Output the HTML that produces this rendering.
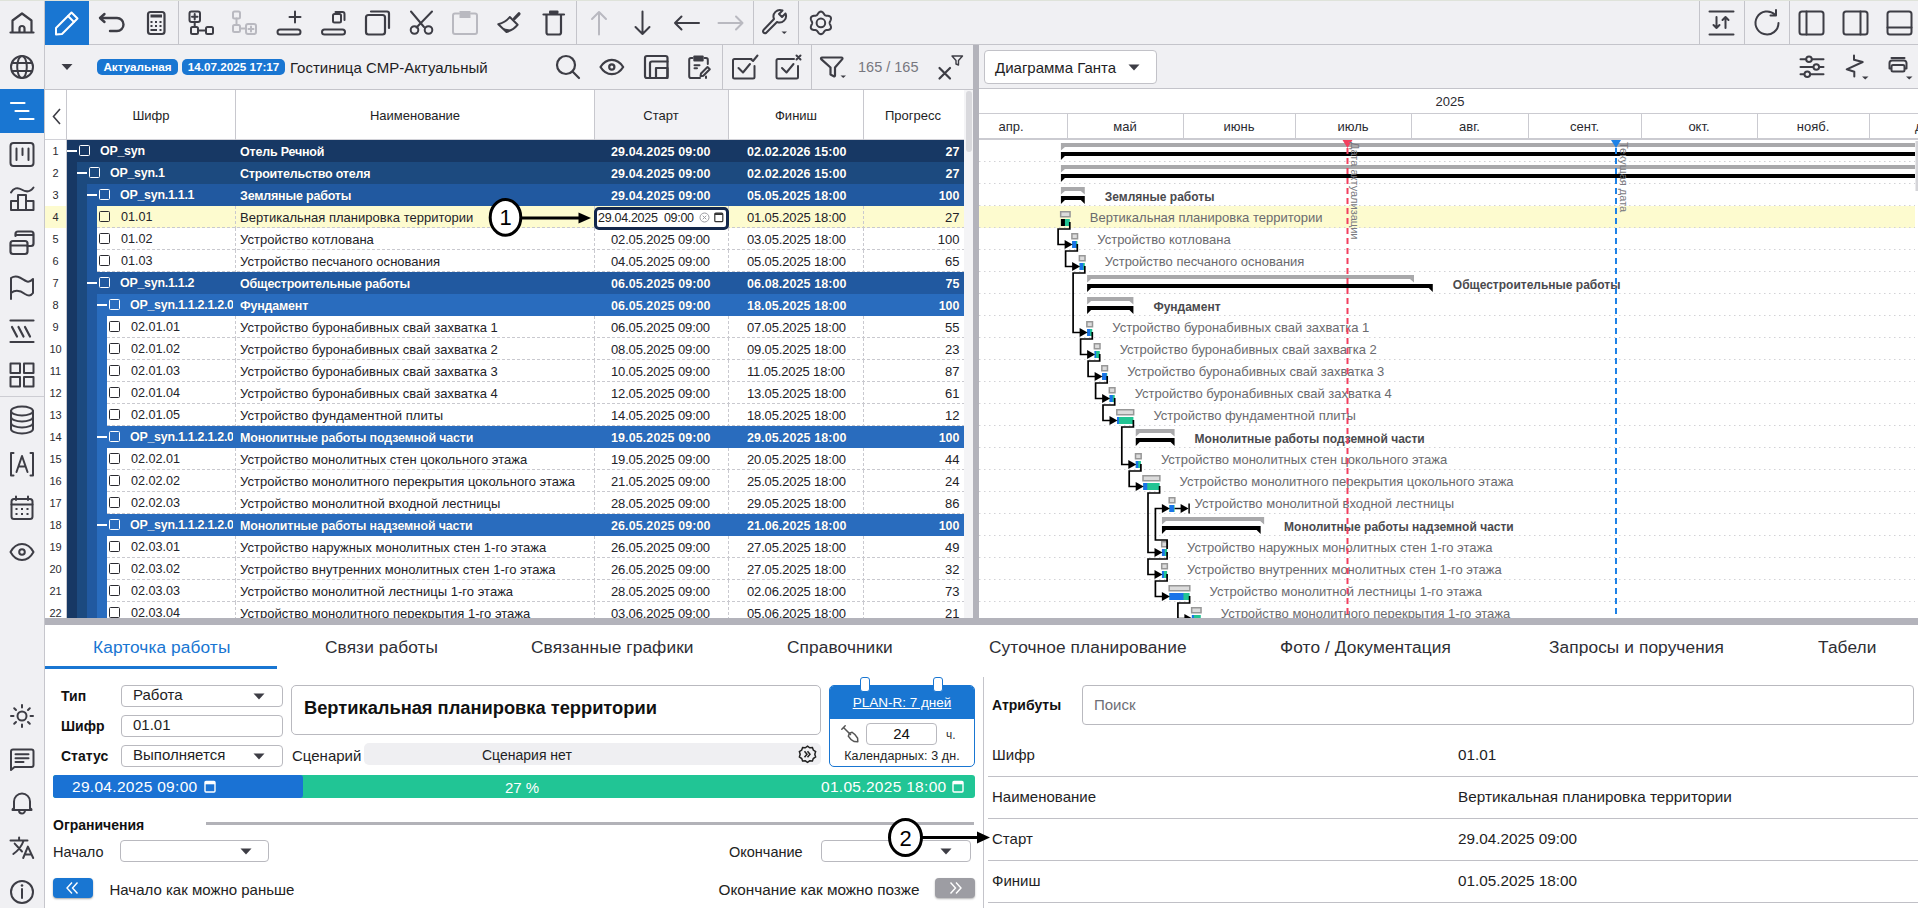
<!DOCTYPE html>
<html><head><meta charset="utf-8"><style>
html,body{margin:0;padding:0;}
body{width:1918px;height:908px;overflow:hidden;position:relative;background:#f0f0f3;font-family:"Liberation Sans", sans-serif;}
</style></head><body>
<div style="position:absolute;left:0px;top:0px;width:1918px;height:1px;background:#dfe3da"></div><div style="position:absolute;left:44px;top:1px;width:1px;height:907px;background:#c6c6cc"></div><div style="position:absolute;left:0px;top:89px;width:44px;height:44px;background:#1976d2"></div><div style="position:absolute;left:0px;top:396px;width:44px;height:1px;background:#cdcdd3"></div><div style="position:absolute;left:45px;top:1px;width:44px;height:44px;background:#1976d2"></div><div style="position:absolute;left:89px;top:44px;width:1829px;height:1px;background:#c4c4ca"></div><div style="position:absolute;left:45px;top:89px;width:928px;height:1px;background:#c4c4ca"></div><div style="position:absolute;left:979px;top:88px;width:939px;height:1px;background:#c4c4ca"></div><div style="position:absolute;left:97px;top:59px;width:81px;height:16px;background:#1976d2;border-radius:5px"></div><div style="position:absolute;left:92.5px;top:58.7px;width:90px;height:16px;line-height:16px;text-align:center;font-size:11.7px;color:#fff;font-weight:bold;white-space:nowrap;">Актуальная</div><div style="position:absolute;left:182px;top:59px;width:103px;height:16px;background:#1976d2;border-radius:5px"></div><div style="position:absolute;left:178.5px;top:58.7px;width:110px;height:16px;line-height:16px;text-align:center;font-size:11.7px;color:#fff;font-weight:bold;white-space:nowrap;">14.07.2025 17:17</div><div style="position:absolute;left:290px;top:58.0px;height:19px;line-height:19px;font-size:15px;color:#1e1e24;font-weight:normal;white-space:nowrap;">Гостиница СМР-Актуальный</div><div style="position:absolute;left:858px;top:58.0px;height:18px;line-height:18px;font-size:14.5px;color:#77777f;font-weight:normal;white-space:nowrap;letter-spacing:0px">165 / 165</div><div style="position:absolute;left:45px;top:90px;width:919px;height:49px;background:#fff"></div><div style="position:absolute;left:595px;top:90px;width:133px;height:49px;background:#f2f2f5"></div><div style="position:absolute;left:45px;top:139px;width:919px;height:1px;background:#d2d2d8"></div><div style="position:absolute;left:66px;top:90px;width:1px;height:50px;background:#c8c8ce"></div><div style="position:absolute;left:235px;top:90px;width:1px;height:50px;background:#c8c8ce"></div><div style="position:absolute;left:594px;top:90px;width:1px;height:50px;background:#c8c8ce"></div><div style="position:absolute;left:728px;top:90px;width:1px;height:50px;background:#c8c8ce"></div><div style="position:absolute;left:863px;top:90px;width:1px;height:50px;background:#c8c8ce"></div><svg style="position:absolute;left:50px;top:106px" width="14" height="20" viewBox="0 0 14 20"><path d="M10 3L3.5 10.5L10 18" fill="none" stroke="#3d3d45" stroke-width="1.6"/></svg><div style="position:absolute;left:71.0px;top:106.5px;width:160px;height:17px;line-height:17px;text-align:center;font-size:13px;color:#1e1e24;font-weight:normal;white-space:nowrap;">Шифр</div><div style="position:absolute;left:335.0px;top:106.5px;width:160px;height:17px;line-height:17px;text-align:center;font-size:13px;color:#1e1e24;font-weight:normal;white-space:nowrap;">Наименование</div><div style="position:absolute;left:581.0px;top:106.5px;width:160px;height:17px;line-height:17px;text-align:center;font-size:13px;color:#1e1e24;font-weight:normal;white-space:nowrap;">Старт</div><div style="position:absolute;left:716.0px;top:106.5px;width:160px;height:17px;line-height:17px;text-align:center;font-size:13px;color:#1e1e24;font-weight:normal;white-space:nowrap;">Финиш</div><div style="position:absolute;left:833.0px;top:106.5px;width:160px;height:17px;line-height:17px;text-align:center;font-size:13px;color:#1e1e24;font-weight:normal;white-space:nowrap;">Прогресс</div><div style="position:absolute;left:45px;top:140px;width:21px;height:22px;background:#fff"></div><div style="position:absolute;left:43.5px;top:144.0px;width:24px;height:15px;line-height:15px;text-align:center;font-size:11px;color:#2a2a30;font-weight:normal;white-space:nowrap;">1</div><div style="position:absolute;left:67px;top:140px;width:897px;height:22px;background:#173864"></div><div style="position:absolute;left:67px;top:150px;width:10px;height:2px;background:#fff"></div><div style="position:absolute;left:79px;top:145px;width:9.4px;height:9.4px;border:1.6px solid #fff;border-radius:1.5px"></div><div style="position:absolute;left:100px;top:142px;width:133px;overflow:hidden;line-height:18px;font-size:12.5px;font-weight:bold;color:#fff;white-space:nowrap;letter-spacing:-0.3px;text-shadow:0 0 1px rgba(0,0,0,.35)">OP_syn</div><div style="position:absolute;left:240px;top:143.5px;height:16px;line-height:16px;font-size:12.5px;color:#fff;font-weight:bold;white-space:nowrap;letter-spacing:-0.2px;text-shadow:0 0 1px rgba(0,0,0,.35)">Отель Речной</div><div style="position:absolute;left:611px;top:143.5px;height:16px;line-height:16px;font-size:12.5px;color:#fff;font-weight:bold;white-space:nowrap;letter-spacing:0.1px;text-shadow:0 0 1px rgba(0,0,0,.35)">29.04.2025 09:00</div><div style="position:absolute;left:747px;top:143.5px;height:16px;line-height:16px;font-size:12.5px;color:#fff;font-weight:bold;white-space:nowrap;letter-spacing:0.1px;text-shadow:0 0 1px rgba(0,0,0,.35)">02.02.2026 15:00</div><div style="position:absolute;left:899.5px;top:143.5px;width:60px;height:16px;line-height:16px;text-align:right;font-size:12.5px;color:#fff;font-weight:bold;white-space:nowrap;text-shadow:0 0 1px rgba(0,0,0,.35)">27</div><div style="position:absolute;left:45px;top:162px;width:21px;height:22px;background:#fff"></div><div style="position:absolute;left:43.5px;top:166.0px;width:24px;height:15px;line-height:15px;text-align:center;font-size:11px;color:#2a2a30;font-weight:normal;white-space:nowrap;">2</div><div style="position:absolute;left:67px;top:162px;width:10px;height:22px;background:#173864"></div><div style="position:absolute;left:77px;top:162px;width:887px;height:22px;background:#1c4a7f"></div><div style="position:absolute;left:77px;top:172px;width:10px;height:2px;background:#fff"></div><div style="position:absolute;left:89px;top:167px;width:9.4px;height:9.4px;border:1.6px solid #fff;border-radius:1.5px"></div><div style="position:absolute;left:110px;top:164px;width:123px;overflow:hidden;line-height:18px;font-size:12.5px;font-weight:bold;color:#fff;white-space:nowrap;letter-spacing:-0.3px;text-shadow:0 0 1px rgba(0,0,0,.35)">OP_syn.1</div><div style="position:absolute;left:240px;top:165.5px;height:16px;line-height:16px;font-size:12.5px;color:#fff;font-weight:bold;white-space:nowrap;letter-spacing:-0.2px;text-shadow:0 0 1px rgba(0,0,0,.35)">Строительство отеля</div><div style="position:absolute;left:611px;top:165.5px;height:16px;line-height:16px;font-size:12.5px;color:#fff;font-weight:bold;white-space:nowrap;letter-spacing:0.1px;text-shadow:0 0 1px rgba(0,0,0,.35)">29.04.2025 09:00</div><div style="position:absolute;left:747px;top:165.5px;height:16px;line-height:16px;font-size:12.5px;color:#fff;font-weight:bold;white-space:nowrap;letter-spacing:0.1px;text-shadow:0 0 1px rgba(0,0,0,.35)">02.02.2026 15:00</div><div style="position:absolute;left:899.5px;top:165.5px;width:60px;height:16px;line-height:16px;text-align:right;font-size:12.5px;color:#fff;font-weight:bold;white-space:nowrap;text-shadow:0 0 1px rgba(0,0,0,.35)">27</div><div style="position:absolute;left:45px;top:184px;width:21px;height:22px;background:#fff"></div><div style="position:absolute;left:43.5px;top:188.0px;width:24px;height:15px;line-height:15px;text-align:center;font-size:11px;color:#2a2a30;font-weight:normal;white-space:nowrap;">3</div><div style="position:absolute;left:67px;top:184px;width:10px;height:22px;background:#173864"></div><div style="position:absolute;left:77px;top:184px;width:10px;height:22px;background:#1c4a7f"></div><div style="position:absolute;left:87px;top:184px;width:877px;height:22px;background:#2159a0"></div><div style="position:absolute;left:87px;top:194px;width:10px;height:2px;background:#fff"></div><div style="position:absolute;left:99px;top:189px;width:9.4px;height:9.4px;border:1.6px solid #fff;border-radius:1.5px"></div><div style="position:absolute;left:120px;top:186px;width:113px;overflow:hidden;line-height:18px;font-size:12.5px;font-weight:bold;color:#fff;white-space:nowrap;letter-spacing:-0.3px;text-shadow:0 0 1px rgba(0,0,0,.35)">OP_syn.1.1.1</div><div style="position:absolute;left:240px;top:187.5px;height:16px;line-height:16px;font-size:12.5px;color:#fff;font-weight:bold;white-space:nowrap;letter-spacing:-0.2px;text-shadow:0 0 1px rgba(0,0,0,.35)">Земляные работы</div><div style="position:absolute;left:611px;top:187.5px;height:16px;line-height:16px;font-size:12.5px;color:#fff;font-weight:bold;white-space:nowrap;letter-spacing:0.1px;text-shadow:0 0 1px rgba(0,0,0,.35)">29.04.2025 09:00</div><div style="position:absolute;left:747px;top:187.5px;height:16px;line-height:16px;font-size:12.5px;color:#fff;font-weight:bold;white-space:nowrap;letter-spacing:0.1px;text-shadow:0 0 1px rgba(0,0,0,.35)">05.05.2025 18:00</div><div style="position:absolute;left:899.5px;top:187.5px;width:60px;height:16px;line-height:16px;text-align:right;font-size:12.5px;color:#fff;font-weight:bold;white-space:nowrap;text-shadow:0 0 1px rgba(0,0,0,.35)">100</div><div style="position:absolute;left:45px;top:206px;width:21px;height:22px;background:#fdfbcf"></div><div style="position:absolute;left:43.5px;top:210.0px;width:24px;height:15px;line-height:15px;text-align:center;font-size:11px;color:#2a2a30;font-weight:normal;white-space:nowrap;">4</div><div style="position:absolute;left:67px;top:206px;width:10px;height:22px;background:#173864"></div><div style="position:absolute;left:77px;top:206px;width:10px;height:22px;background:#1c4a7f"></div><div style="position:absolute;left:87px;top:206px;width:10px;height:22px;background:#2159a0"></div><div style="position:absolute;left:97px;top:206px;width:867px;height:22px;background:#fdfbcf"></div><div style="position:absolute;left:97px;top:227px;width:867px;height:1px;background-image:linear-gradient(90deg,#c9c9cf 3px,transparent 3px);background-size:5px 1px"></div><div style="position:absolute;left:235px;top:206px;width:1px;height:22px;background-image:linear-gradient(180deg,#c9c9cf 3px,transparent 3px);background-size:1px 5px"></div><div style="position:absolute;left:594px;top:206px;width:1px;height:22px;background-image:linear-gradient(180deg,#c9c9cf 3px,transparent 3px);background-size:1px 5px"></div><div style="position:absolute;left:728px;top:206px;width:1px;height:22px;background-image:linear-gradient(180deg,#c9c9cf 3px,transparent 3px);background-size:1px 5px"></div><div style="position:absolute;left:863px;top:206px;width:1px;height:22px;background-image:linear-gradient(180deg,#c9c9cf 3px,transparent 3px);background-size:1px 5px"></div><div style="position:absolute;left:99px;top:211px;width:9.4px;height:9.4px;border:1.6px solid #2a2a30;border-radius:1.5px"></div><div style="position:absolute;left:121px;top:209.0px;height:17px;line-height:17px;font-size:12.6px;color:#222228;font-weight:normal;white-space:nowrap;">01.01</div><div style="position:absolute;left:240px;top:209.0px;height:17px;line-height:17px;font-size:13px;color:#222228;font-weight:normal;white-space:nowrap;letter-spacing:0.02px">Вертикальная планировка территории</div><div style="position:absolute;left:747px;top:209.0px;height:17px;line-height:17px;font-size:13px;color:#222228;font-weight:normal;white-space:nowrap;letter-spacing:-0.15px">01.05.2025 18:00</div><div style="position:absolute;left:899.5px;top:209.0px;width:60px;height:17px;line-height:17px;text-align:right;font-size:13px;color:#222228;font-weight:normal;white-space:nowrap;">27</div><div style="position:absolute;left:45px;top:228px;width:21px;height:22px;background:#fff"></div><div style="position:absolute;left:43.5px;top:232.0px;width:24px;height:15px;line-height:15px;text-align:center;font-size:11px;color:#2a2a30;font-weight:normal;white-space:nowrap;">5</div><div style="position:absolute;left:67px;top:228px;width:10px;height:22px;background:#173864"></div><div style="position:absolute;left:77px;top:228px;width:10px;height:22px;background:#1c4a7f"></div><div style="position:absolute;left:87px;top:228px;width:10px;height:22px;background:#2159a0"></div><div style="position:absolute;left:97px;top:228px;width:867px;height:22px;background:#fff"></div><div style="position:absolute;left:97px;top:249px;width:867px;height:1px;background-image:linear-gradient(90deg,#c9c9cf 3px,transparent 3px);background-size:5px 1px"></div><div style="position:absolute;left:235px;top:228px;width:1px;height:22px;background-image:linear-gradient(180deg,#c9c9cf 3px,transparent 3px);background-size:1px 5px"></div><div style="position:absolute;left:594px;top:228px;width:1px;height:22px;background-image:linear-gradient(180deg,#c9c9cf 3px,transparent 3px);background-size:1px 5px"></div><div style="position:absolute;left:728px;top:228px;width:1px;height:22px;background-image:linear-gradient(180deg,#c9c9cf 3px,transparent 3px);background-size:1px 5px"></div><div style="position:absolute;left:863px;top:228px;width:1px;height:22px;background-image:linear-gradient(180deg,#c9c9cf 3px,transparent 3px);background-size:1px 5px"></div><div style="position:absolute;left:99px;top:233px;width:9.4px;height:9.4px;border:1.6px solid #2a2a30;border-radius:1.5px"></div><div style="position:absolute;left:121px;top:231.0px;height:17px;line-height:17px;font-size:12.6px;color:#222228;font-weight:normal;white-space:nowrap;">01.02</div><div style="position:absolute;left:240px;top:231.0px;height:17px;line-height:17px;font-size:13px;color:#222228;font-weight:normal;white-space:nowrap;letter-spacing:0.02px">Устройство котлована</div><div style="position:absolute;left:611px;top:231.0px;height:17px;line-height:17px;font-size:13px;color:#222228;font-weight:normal;white-space:nowrap;letter-spacing:-0.15px">02.05.2025 09:00</div><div style="position:absolute;left:747px;top:231.0px;height:17px;line-height:17px;font-size:13px;color:#222228;font-weight:normal;white-space:nowrap;letter-spacing:-0.15px">03.05.2025 18:00</div><div style="position:absolute;left:899.5px;top:231.0px;width:60px;height:17px;line-height:17px;text-align:right;font-size:13px;color:#222228;font-weight:normal;white-space:nowrap;">100</div><div style="position:absolute;left:45px;top:250px;width:21px;height:22px;background:#fff"></div><div style="position:absolute;left:43.5px;top:254.0px;width:24px;height:15px;line-height:15px;text-align:center;font-size:11px;color:#2a2a30;font-weight:normal;white-space:nowrap;">6</div><div style="position:absolute;left:67px;top:250px;width:10px;height:22px;background:#173864"></div><div style="position:absolute;left:77px;top:250px;width:10px;height:22px;background:#1c4a7f"></div><div style="position:absolute;left:87px;top:250px;width:10px;height:22px;background:#2159a0"></div><div style="position:absolute;left:97px;top:250px;width:867px;height:22px;background:#fff"></div><div style="position:absolute;left:97px;top:271px;width:867px;height:1px;background-image:linear-gradient(90deg,#c9c9cf 3px,transparent 3px);background-size:5px 1px"></div><div style="position:absolute;left:235px;top:250px;width:1px;height:22px;background-image:linear-gradient(180deg,#c9c9cf 3px,transparent 3px);background-size:1px 5px"></div><div style="position:absolute;left:594px;top:250px;width:1px;height:22px;background-image:linear-gradient(180deg,#c9c9cf 3px,transparent 3px);background-size:1px 5px"></div><div style="position:absolute;left:728px;top:250px;width:1px;height:22px;background-image:linear-gradient(180deg,#c9c9cf 3px,transparent 3px);background-size:1px 5px"></div><div style="position:absolute;left:863px;top:250px;width:1px;height:22px;background-image:linear-gradient(180deg,#c9c9cf 3px,transparent 3px);background-size:1px 5px"></div><div style="position:absolute;left:99px;top:255px;width:9.4px;height:9.4px;border:1.6px solid #2a2a30;border-radius:1.5px"></div><div style="position:absolute;left:121px;top:253.0px;height:17px;line-height:17px;font-size:12.6px;color:#222228;font-weight:normal;white-space:nowrap;">01.03</div><div style="position:absolute;left:240px;top:253.0px;height:17px;line-height:17px;font-size:13px;color:#222228;font-weight:normal;white-space:nowrap;letter-spacing:0.02px">Устройство песчаного основания</div><div style="position:absolute;left:611px;top:253.0px;height:17px;line-height:17px;font-size:13px;color:#222228;font-weight:normal;white-space:nowrap;letter-spacing:-0.15px">04.05.2025 09:00</div><div style="position:absolute;left:747px;top:253.0px;height:17px;line-height:17px;font-size:13px;color:#222228;font-weight:normal;white-space:nowrap;letter-spacing:-0.15px">05.05.2025 18:00</div><div style="position:absolute;left:899.5px;top:253.0px;width:60px;height:17px;line-height:17px;text-align:right;font-size:13px;color:#222228;font-weight:normal;white-space:nowrap;">65</div><div style="position:absolute;left:45px;top:272px;width:21px;height:22px;background:#fff"></div><div style="position:absolute;left:43.5px;top:276.0px;width:24px;height:15px;line-height:15px;text-align:center;font-size:11px;color:#2a2a30;font-weight:normal;white-space:nowrap;">7</div><div style="position:absolute;left:67px;top:272px;width:10px;height:22px;background:#173864"></div><div style="position:absolute;left:77px;top:272px;width:10px;height:22px;background:#1c4a7f"></div><div style="position:absolute;left:87px;top:272px;width:877px;height:22px;background:#2159a0"></div><div style="position:absolute;left:87px;top:282px;width:10px;height:2px;background:#fff"></div><div style="position:absolute;left:99px;top:277px;width:9.4px;height:9.4px;border:1.6px solid #fff;border-radius:1.5px"></div><div style="position:absolute;left:120px;top:274px;width:113px;overflow:hidden;line-height:18px;font-size:12.5px;font-weight:bold;color:#fff;white-space:nowrap;letter-spacing:-0.3px;text-shadow:0 0 1px rgba(0,0,0,.35)">OP_syn.1.1.2</div><div style="position:absolute;left:240px;top:275.5px;height:16px;line-height:16px;font-size:12.5px;color:#fff;font-weight:bold;white-space:nowrap;letter-spacing:-0.2px;text-shadow:0 0 1px rgba(0,0,0,.35)">Общестроительные работы</div><div style="position:absolute;left:611px;top:275.5px;height:16px;line-height:16px;font-size:12.5px;color:#fff;font-weight:bold;white-space:nowrap;letter-spacing:0.1px;text-shadow:0 0 1px rgba(0,0,0,.35)">06.05.2025 09:00</div><div style="position:absolute;left:747px;top:275.5px;height:16px;line-height:16px;font-size:12.5px;color:#fff;font-weight:bold;white-space:nowrap;letter-spacing:0.1px;text-shadow:0 0 1px rgba(0,0,0,.35)">06.08.2025 18:00</div><div style="position:absolute;left:899.5px;top:275.5px;width:60px;height:16px;line-height:16px;text-align:right;font-size:12.5px;color:#fff;font-weight:bold;white-space:nowrap;text-shadow:0 0 1px rgba(0,0,0,.35)">75</div><div style="position:absolute;left:45px;top:294px;width:21px;height:22px;background:#fff"></div><div style="position:absolute;left:43.5px;top:298.0px;width:24px;height:15px;line-height:15px;text-align:center;font-size:11px;color:#2a2a30;font-weight:normal;white-space:nowrap;">8</div><div style="position:absolute;left:67px;top:294px;width:10px;height:22px;background:#173864"></div><div style="position:absolute;left:77px;top:294px;width:10px;height:22px;background:#1c4a7f"></div><div style="position:absolute;left:87px;top:294px;width:10px;height:22px;background:#2159a0"></div><div style="position:absolute;left:97px;top:294px;width:867px;height:22px;background:#296cbe"></div><div style="position:absolute;left:97px;top:304px;width:10px;height:2px;background:#fff"></div><div style="position:absolute;left:109px;top:299px;width:9.4px;height:9.4px;border:1.6px solid #fff;border-radius:1.5px"></div><div style="position:absolute;left:130px;top:296px;width:103px;overflow:hidden;line-height:18px;font-size:12.5px;font-weight:bold;color:#fff;white-space:nowrap;letter-spacing:-0.3px;text-shadow:0 0 1px rgba(0,0,0,.35)">OP_syn.1.1.2.1.2.0</div><div style="position:absolute;left:240px;top:297.5px;height:16px;line-height:16px;font-size:12.5px;color:#fff;font-weight:bold;white-space:nowrap;letter-spacing:-0.2px;text-shadow:0 0 1px rgba(0,0,0,.35)">Фундамент</div><div style="position:absolute;left:611px;top:297.5px;height:16px;line-height:16px;font-size:12.5px;color:#fff;font-weight:bold;white-space:nowrap;letter-spacing:0.1px;text-shadow:0 0 1px rgba(0,0,0,.35)">06.05.2025 09:00</div><div style="position:absolute;left:747px;top:297.5px;height:16px;line-height:16px;font-size:12.5px;color:#fff;font-weight:bold;white-space:nowrap;letter-spacing:0.1px;text-shadow:0 0 1px rgba(0,0,0,.35)">18.05.2025 18:00</div><div style="position:absolute;left:899.5px;top:297.5px;width:60px;height:16px;line-height:16px;text-align:right;font-size:12.5px;color:#fff;font-weight:bold;white-space:nowrap;text-shadow:0 0 1px rgba(0,0,0,.35)">100</div><div style="position:absolute;left:45px;top:316px;width:21px;height:22px;background:#fff"></div><div style="position:absolute;left:43.5px;top:320.0px;width:24px;height:15px;line-height:15px;text-align:center;font-size:11px;color:#2a2a30;font-weight:normal;white-space:nowrap;">9</div><div style="position:absolute;left:67px;top:316px;width:10px;height:22px;background:#173864"></div><div style="position:absolute;left:77px;top:316px;width:10px;height:22px;background:#1c4a7f"></div><div style="position:absolute;left:87px;top:316px;width:10px;height:22px;background:#2159a0"></div><div style="position:absolute;left:97px;top:316px;width:10px;height:22px;background:#296cbe"></div><div style="position:absolute;left:107px;top:316px;width:857px;height:22px;background:#fff"></div><div style="position:absolute;left:107px;top:337px;width:857px;height:1px;background-image:linear-gradient(90deg,#c9c9cf 3px,transparent 3px);background-size:5px 1px"></div><div style="position:absolute;left:235px;top:316px;width:1px;height:22px;background-image:linear-gradient(180deg,#c9c9cf 3px,transparent 3px);background-size:1px 5px"></div><div style="position:absolute;left:594px;top:316px;width:1px;height:22px;background-image:linear-gradient(180deg,#c9c9cf 3px,transparent 3px);background-size:1px 5px"></div><div style="position:absolute;left:728px;top:316px;width:1px;height:22px;background-image:linear-gradient(180deg,#c9c9cf 3px,transparent 3px);background-size:1px 5px"></div><div style="position:absolute;left:863px;top:316px;width:1px;height:22px;background-image:linear-gradient(180deg,#c9c9cf 3px,transparent 3px);background-size:1px 5px"></div><div style="position:absolute;left:109px;top:321px;width:9.4px;height:9.4px;border:1.6px solid #2a2a30;border-radius:1.5px"></div><div style="position:absolute;left:131px;top:319.0px;height:17px;line-height:17px;font-size:12.6px;color:#222228;font-weight:normal;white-space:nowrap;">02.01.01</div><div style="position:absolute;left:240px;top:319.0px;height:17px;line-height:17px;font-size:13px;color:#222228;font-weight:normal;white-space:nowrap;letter-spacing:0.02px">Устройство буронабивных свай захватка 1</div><div style="position:absolute;left:611px;top:319.0px;height:17px;line-height:17px;font-size:13px;color:#222228;font-weight:normal;white-space:nowrap;letter-spacing:-0.15px">06.05.2025 09:00</div><div style="position:absolute;left:747px;top:319.0px;height:17px;line-height:17px;font-size:13px;color:#222228;font-weight:normal;white-space:nowrap;letter-spacing:-0.15px">07.05.2025 18:00</div><div style="position:absolute;left:899.5px;top:319.0px;width:60px;height:17px;line-height:17px;text-align:right;font-size:13px;color:#222228;font-weight:normal;white-space:nowrap;">55</div><div style="position:absolute;left:45px;top:338px;width:21px;height:22px;background:#fff"></div><div style="position:absolute;left:43.5px;top:342.0px;width:24px;height:15px;line-height:15px;text-align:center;font-size:11px;color:#2a2a30;font-weight:normal;white-space:nowrap;">10</div><div style="position:absolute;left:67px;top:338px;width:10px;height:22px;background:#173864"></div><div style="position:absolute;left:77px;top:338px;width:10px;height:22px;background:#1c4a7f"></div><div style="position:absolute;left:87px;top:338px;width:10px;height:22px;background:#2159a0"></div><div style="position:absolute;left:97px;top:338px;width:10px;height:22px;background:#296cbe"></div><div style="position:absolute;left:107px;top:338px;width:857px;height:22px;background:#fff"></div><div style="position:absolute;left:107px;top:359px;width:857px;height:1px;background-image:linear-gradient(90deg,#c9c9cf 3px,transparent 3px);background-size:5px 1px"></div><div style="position:absolute;left:235px;top:338px;width:1px;height:22px;background-image:linear-gradient(180deg,#c9c9cf 3px,transparent 3px);background-size:1px 5px"></div><div style="position:absolute;left:594px;top:338px;width:1px;height:22px;background-image:linear-gradient(180deg,#c9c9cf 3px,transparent 3px);background-size:1px 5px"></div><div style="position:absolute;left:728px;top:338px;width:1px;height:22px;background-image:linear-gradient(180deg,#c9c9cf 3px,transparent 3px);background-size:1px 5px"></div><div style="position:absolute;left:863px;top:338px;width:1px;height:22px;background-image:linear-gradient(180deg,#c9c9cf 3px,transparent 3px);background-size:1px 5px"></div><div style="position:absolute;left:109px;top:343px;width:9.4px;height:9.4px;border:1.6px solid #2a2a30;border-radius:1.5px"></div><div style="position:absolute;left:131px;top:341.0px;height:17px;line-height:17px;font-size:12.6px;color:#222228;font-weight:normal;white-space:nowrap;">02.01.02</div><div style="position:absolute;left:240px;top:341.0px;height:17px;line-height:17px;font-size:13px;color:#222228;font-weight:normal;white-space:nowrap;letter-spacing:0.02px">Устройство буронабивных свай захватка 2</div><div style="position:absolute;left:611px;top:341.0px;height:17px;line-height:17px;font-size:13px;color:#222228;font-weight:normal;white-space:nowrap;letter-spacing:-0.15px">08.05.2025 09:00</div><div style="position:absolute;left:747px;top:341.0px;height:17px;line-height:17px;font-size:13px;color:#222228;font-weight:normal;white-space:nowrap;letter-spacing:-0.15px">09.05.2025 18:00</div><div style="position:absolute;left:899.5px;top:341.0px;width:60px;height:17px;line-height:17px;text-align:right;font-size:13px;color:#222228;font-weight:normal;white-space:nowrap;">23</div><div style="position:absolute;left:45px;top:360px;width:21px;height:22px;background:#fff"></div><div style="position:absolute;left:43.5px;top:364.0px;width:24px;height:15px;line-height:15px;text-align:center;font-size:11px;color:#2a2a30;font-weight:normal;white-space:nowrap;">11</div><div style="position:absolute;left:67px;top:360px;width:10px;height:22px;background:#173864"></div><div style="position:absolute;left:77px;top:360px;width:10px;height:22px;background:#1c4a7f"></div><div style="position:absolute;left:87px;top:360px;width:10px;height:22px;background:#2159a0"></div><div style="position:absolute;left:97px;top:360px;width:10px;height:22px;background:#296cbe"></div><div style="position:absolute;left:107px;top:360px;width:857px;height:22px;background:#fff"></div><div style="position:absolute;left:107px;top:381px;width:857px;height:1px;background-image:linear-gradient(90deg,#c9c9cf 3px,transparent 3px);background-size:5px 1px"></div><div style="position:absolute;left:235px;top:360px;width:1px;height:22px;background-image:linear-gradient(180deg,#c9c9cf 3px,transparent 3px);background-size:1px 5px"></div><div style="position:absolute;left:594px;top:360px;width:1px;height:22px;background-image:linear-gradient(180deg,#c9c9cf 3px,transparent 3px);background-size:1px 5px"></div><div style="position:absolute;left:728px;top:360px;width:1px;height:22px;background-image:linear-gradient(180deg,#c9c9cf 3px,transparent 3px);background-size:1px 5px"></div><div style="position:absolute;left:863px;top:360px;width:1px;height:22px;background-image:linear-gradient(180deg,#c9c9cf 3px,transparent 3px);background-size:1px 5px"></div><div style="position:absolute;left:109px;top:365px;width:9.4px;height:9.4px;border:1.6px solid #2a2a30;border-radius:1.5px"></div><div style="position:absolute;left:131px;top:363.0px;height:17px;line-height:17px;font-size:12.6px;color:#222228;font-weight:normal;white-space:nowrap;">02.01.03</div><div style="position:absolute;left:240px;top:363.0px;height:17px;line-height:17px;font-size:13px;color:#222228;font-weight:normal;white-space:nowrap;letter-spacing:0.02px">Устройство буронабивных свай захватка 3</div><div style="position:absolute;left:611px;top:363.0px;height:17px;line-height:17px;font-size:13px;color:#222228;font-weight:normal;white-space:nowrap;letter-spacing:-0.15px">10.05.2025 09:00</div><div style="position:absolute;left:747px;top:363.0px;height:17px;line-height:17px;font-size:13px;color:#222228;font-weight:normal;white-space:nowrap;letter-spacing:-0.15px">11.05.2025 18:00</div><div style="position:absolute;left:899.5px;top:363.0px;width:60px;height:17px;line-height:17px;text-align:right;font-size:13px;color:#222228;font-weight:normal;white-space:nowrap;">87</div><div style="position:absolute;left:45px;top:382px;width:21px;height:22px;background:#fff"></div><div style="position:absolute;left:43.5px;top:386.0px;width:24px;height:15px;line-height:15px;text-align:center;font-size:11px;color:#2a2a30;font-weight:normal;white-space:nowrap;">12</div><div style="position:absolute;left:67px;top:382px;width:10px;height:22px;background:#173864"></div><div style="position:absolute;left:77px;top:382px;width:10px;height:22px;background:#1c4a7f"></div><div style="position:absolute;left:87px;top:382px;width:10px;height:22px;background:#2159a0"></div><div style="position:absolute;left:97px;top:382px;width:10px;height:22px;background:#296cbe"></div><div style="position:absolute;left:107px;top:382px;width:857px;height:22px;background:#fff"></div><div style="position:absolute;left:107px;top:403px;width:857px;height:1px;background-image:linear-gradient(90deg,#c9c9cf 3px,transparent 3px);background-size:5px 1px"></div><div style="position:absolute;left:235px;top:382px;width:1px;height:22px;background-image:linear-gradient(180deg,#c9c9cf 3px,transparent 3px);background-size:1px 5px"></div><div style="position:absolute;left:594px;top:382px;width:1px;height:22px;background-image:linear-gradient(180deg,#c9c9cf 3px,transparent 3px);background-size:1px 5px"></div><div style="position:absolute;left:728px;top:382px;width:1px;height:22px;background-image:linear-gradient(180deg,#c9c9cf 3px,transparent 3px);background-size:1px 5px"></div><div style="position:absolute;left:863px;top:382px;width:1px;height:22px;background-image:linear-gradient(180deg,#c9c9cf 3px,transparent 3px);background-size:1px 5px"></div><div style="position:absolute;left:109px;top:387px;width:9.4px;height:9.4px;border:1.6px solid #2a2a30;border-radius:1.5px"></div><div style="position:absolute;left:131px;top:385.0px;height:17px;line-height:17px;font-size:12.6px;color:#222228;font-weight:normal;white-space:nowrap;">02.01.04</div><div style="position:absolute;left:240px;top:385.0px;height:17px;line-height:17px;font-size:13px;color:#222228;font-weight:normal;white-space:nowrap;letter-spacing:0.02px">Устройство буронабивных свай захватка 4</div><div style="position:absolute;left:611px;top:385.0px;height:17px;line-height:17px;font-size:13px;color:#222228;font-weight:normal;white-space:nowrap;letter-spacing:-0.15px">12.05.2025 09:00</div><div style="position:absolute;left:747px;top:385.0px;height:17px;line-height:17px;font-size:13px;color:#222228;font-weight:normal;white-space:nowrap;letter-spacing:-0.15px">13.05.2025 18:00</div><div style="position:absolute;left:899.5px;top:385.0px;width:60px;height:17px;line-height:17px;text-align:right;font-size:13px;color:#222228;font-weight:normal;white-space:nowrap;">61</div><div style="position:absolute;left:45px;top:404px;width:21px;height:22px;background:#fff"></div><div style="position:absolute;left:43.5px;top:408.0px;width:24px;height:15px;line-height:15px;text-align:center;font-size:11px;color:#2a2a30;font-weight:normal;white-space:nowrap;">13</div><div style="position:absolute;left:67px;top:404px;width:10px;height:22px;background:#173864"></div><div style="position:absolute;left:77px;top:404px;width:10px;height:22px;background:#1c4a7f"></div><div style="position:absolute;left:87px;top:404px;width:10px;height:22px;background:#2159a0"></div><div style="position:absolute;left:97px;top:404px;width:10px;height:22px;background:#296cbe"></div><div style="position:absolute;left:107px;top:404px;width:857px;height:22px;background:#fff"></div><div style="position:absolute;left:107px;top:425px;width:857px;height:1px;background-image:linear-gradient(90deg,#c9c9cf 3px,transparent 3px);background-size:5px 1px"></div><div style="position:absolute;left:235px;top:404px;width:1px;height:22px;background-image:linear-gradient(180deg,#c9c9cf 3px,transparent 3px);background-size:1px 5px"></div><div style="position:absolute;left:594px;top:404px;width:1px;height:22px;background-image:linear-gradient(180deg,#c9c9cf 3px,transparent 3px);background-size:1px 5px"></div><div style="position:absolute;left:728px;top:404px;width:1px;height:22px;background-image:linear-gradient(180deg,#c9c9cf 3px,transparent 3px);background-size:1px 5px"></div><div style="position:absolute;left:863px;top:404px;width:1px;height:22px;background-image:linear-gradient(180deg,#c9c9cf 3px,transparent 3px);background-size:1px 5px"></div><div style="position:absolute;left:109px;top:409px;width:9.4px;height:9.4px;border:1.6px solid #2a2a30;border-radius:1.5px"></div><div style="position:absolute;left:131px;top:407.0px;height:17px;line-height:17px;font-size:12.6px;color:#222228;font-weight:normal;white-space:nowrap;">02.01.05</div><div style="position:absolute;left:240px;top:407.0px;height:17px;line-height:17px;font-size:13px;color:#222228;font-weight:normal;white-space:nowrap;letter-spacing:0.02px">Устройство фундаментной плиты</div><div style="position:absolute;left:611px;top:407.0px;height:17px;line-height:17px;font-size:13px;color:#222228;font-weight:normal;white-space:nowrap;letter-spacing:-0.15px">14.05.2025 09:00</div><div style="position:absolute;left:747px;top:407.0px;height:17px;line-height:17px;font-size:13px;color:#222228;font-weight:normal;white-space:nowrap;letter-spacing:-0.15px">18.05.2025 18:00</div><div style="position:absolute;left:899.5px;top:407.0px;width:60px;height:17px;line-height:17px;text-align:right;font-size:13px;color:#222228;font-weight:normal;white-space:nowrap;">12</div><div style="position:absolute;left:45px;top:426px;width:21px;height:22px;background:#fff"></div><div style="position:absolute;left:43.5px;top:430.0px;width:24px;height:15px;line-height:15px;text-align:center;font-size:11px;color:#2a2a30;font-weight:normal;white-space:nowrap;">14</div><div style="position:absolute;left:67px;top:426px;width:10px;height:22px;background:#173864"></div><div style="position:absolute;left:77px;top:426px;width:10px;height:22px;background:#1c4a7f"></div><div style="position:absolute;left:87px;top:426px;width:10px;height:22px;background:#2159a0"></div><div style="position:absolute;left:97px;top:426px;width:867px;height:22px;background:#296cbe"></div><div style="position:absolute;left:97px;top:436px;width:10px;height:2px;background:#fff"></div><div style="position:absolute;left:109px;top:431px;width:9.4px;height:9.4px;border:1.6px solid #fff;border-radius:1.5px"></div><div style="position:absolute;left:130px;top:428px;width:103px;overflow:hidden;line-height:18px;font-size:12.5px;font-weight:bold;color:#fff;white-space:nowrap;letter-spacing:-0.3px;text-shadow:0 0 1px rgba(0,0,0,.35)">OP_syn.1.1.2.1.2.0</div><div style="position:absolute;left:240px;top:429.5px;height:16px;line-height:16px;font-size:12.5px;color:#fff;font-weight:bold;white-space:nowrap;letter-spacing:-0.2px;text-shadow:0 0 1px rgba(0,0,0,.35)">Монолитные работы подземной части</div><div style="position:absolute;left:611px;top:429.5px;height:16px;line-height:16px;font-size:12.5px;color:#fff;font-weight:bold;white-space:nowrap;letter-spacing:0.1px;text-shadow:0 0 1px rgba(0,0,0,.35)">19.05.2025 09:00</div><div style="position:absolute;left:747px;top:429.5px;height:16px;line-height:16px;font-size:12.5px;color:#fff;font-weight:bold;white-space:nowrap;letter-spacing:0.1px;text-shadow:0 0 1px rgba(0,0,0,.35)">29.05.2025 18:00</div><div style="position:absolute;left:899.5px;top:429.5px;width:60px;height:16px;line-height:16px;text-align:right;font-size:12.5px;color:#fff;font-weight:bold;white-space:nowrap;text-shadow:0 0 1px rgba(0,0,0,.35)">100</div><div style="position:absolute;left:45px;top:448px;width:21px;height:22px;background:#fff"></div><div style="position:absolute;left:43.5px;top:452.0px;width:24px;height:15px;line-height:15px;text-align:center;font-size:11px;color:#2a2a30;font-weight:normal;white-space:nowrap;">15</div><div style="position:absolute;left:67px;top:448px;width:10px;height:22px;background:#173864"></div><div style="position:absolute;left:77px;top:448px;width:10px;height:22px;background:#1c4a7f"></div><div style="position:absolute;left:87px;top:448px;width:10px;height:22px;background:#2159a0"></div><div style="position:absolute;left:97px;top:448px;width:10px;height:22px;background:#296cbe"></div><div style="position:absolute;left:107px;top:448px;width:857px;height:22px;background:#fff"></div><div style="position:absolute;left:107px;top:469px;width:857px;height:1px;background-image:linear-gradient(90deg,#c9c9cf 3px,transparent 3px);background-size:5px 1px"></div><div style="position:absolute;left:235px;top:448px;width:1px;height:22px;background-image:linear-gradient(180deg,#c9c9cf 3px,transparent 3px);background-size:1px 5px"></div><div style="position:absolute;left:594px;top:448px;width:1px;height:22px;background-image:linear-gradient(180deg,#c9c9cf 3px,transparent 3px);background-size:1px 5px"></div><div style="position:absolute;left:728px;top:448px;width:1px;height:22px;background-image:linear-gradient(180deg,#c9c9cf 3px,transparent 3px);background-size:1px 5px"></div><div style="position:absolute;left:863px;top:448px;width:1px;height:22px;background-image:linear-gradient(180deg,#c9c9cf 3px,transparent 3px);background-size:1px 5px"></div><div style="position:absolute;left:109px;top:453px;width:9.4px;height:9.4px;border:1.6px solid #2a2a30;border-radius:1.5px"></div><div style="position:absolute;left:131px;top:451.0px;height:17px;line-height:17px;font-size:12.6px;color:#222228;font-weight:normal;white-space:nowrap;">02.02.01</div><div style="position:absolute;left:240px;top:451.0px;height:17px;line-height:17px;font-size:13px;color:#222228;font-weight:normal;white-space:nowrap;letter-spacing:0.02px">Устройство монолитных стен цокольного этажа</div><div style="position:absolute;left:611px;top:451.0px;height:17px;line-height:17px;font-size:13px;color:#222228;font-weight:normal;white-space:nowrap;letter-spacing:-0.15px">19.05.2025 09:00</div><div style="position:absolute;left:747px;top:451.0px;height:17px;line-height:17px;font-size:13px;color:#222228;font-weight:normal;white-space:nowrap;letter-spacing:-0.15px">20.05.2025 18:00</div><div style="position:absolute;left:899.5px;top:451.0px;width:60px;height:17px;line-height:17px;text-align:right;font-size:13px;color:#222228;font-weight:normal;white-space:nowrap;">44</div><div style="position:absolute;left:45px;top:470px;width:21px;height:22px;background:#fff"></div><div style="position:absolute;left:43.5px;top:474.0px;width:24px;height:15px;line-height:15px;text-align:center;font-size:11px;color:#2a2a30;font-weight:normal;white-space:nowrap;">16</div><div style="position:absolute;left:67px;top:470px;width:10px;height:22px;background:#173864"></div><div style="position:absolute;left:77px;top:470px;width:10px;height:22px;background:#1c4a7f"></div><div style="position:absolute;left:87px;top:470px;width:10px;height:22px;background:#2159a0"></div><div style="position:absolute;left:97px;top:470px;width:10px;height:22px;background:#296cbe"></div><div style="position:absolute;left:107px;top:470px;width:857px;height:22px;background:#fff"></div><div style="position:absolute;left:107px;top:491px;width:857px;height:1px;background-image:linear-gradient(90deg,#c9c9cf 3px,transparent 3px);background-size:5px 1px"></div><div style="position:absolute;left:235px;top:470px;width:1px;height:22px;background-image:linear-gradient(180deg,#c9c9cf 3px,transparent 3px);background-size:1px 5px"></div><div style="position:absolute;left:594px;top:470px;width:1px;height:22px;background-image:linear-gradient(180deg,#c9c9cf 3px,transparent 3px);background-size:1px 5px"></div><div style="position:absolute;left:728px;top:470px;width:1px;height:22px;background-image:linear-gradient(180deg,#c9c9cf 3px,transparent 3px);background-size:1px 5px"></div><div style="position:absolute;left:863px;top:470px;width:1px;height:22px;background-image:linear-gradient(180deg,#c9c9cf 3px,transparent 3px);background-size:1px 5px"></div><div style="position:absolute;left:109px;top:475px;width:9.4px;height:9.4px;border:1.6px solid #2a2a30;border-radius:1.5px"></div><div style="position:absolute;left:131px;top:473.0px;height:17px;line-height:17px;font-size:12.6px;color:#222228;font-weight:normal;white-space:nowrap;">02.02.02</div><div style="position:absolute;left:240px;top:473.0px;height:17px;line-height:17px;font-size:13px;color:#222228;font-weight:normal;white-space:nowrap;letter-spacing:0.02px">Устройство монолитного перекрытия цокольного этажа</div><div style="position:absolute;left:611px;top:473.0px;height:17px;line-height:17px;font-size:13px;color:#222228;font-weight:normal;white-space:nowrap;letter-spacing:-0.15px">21.05.2025 09:00</div><div style="position:absolute;left:747px;top:473.0px;height:17px;line-height:17px;font-size:13px;color:#222228;font-weight:normal;white-space:nowrap;letter-spacing:-0.15px">25.05.2025 18:00</div><div style="position:absolute;left:899.5px;top:473.0px;width:60px;height:17px;line-height:17px;text-align:right;font-size:13px;color:#222228;font-weight:normal;white-space:nowrap;">24</div><div style="position:absolute;left:45px;top:492px;width:21px;height:22px;background:#fff"></div><div style="position:absolute;left:43.5px;top:496.0px;width:24px;height:15px;line-height:15px;text-align:center;font-size:11px;color:#2a2a30;font-weight:normal;white-space:nowrap;">17</div><div style="position:absolute;left:67px;top:492px;width:10px;height:22px;background:#173864"></div><div style="position:absolute;left:77px;top:492px;width:10px;height:22px;background:#1c4a7f"></div><div style="position:absolute;left:87px;top:492px;width:10px;height:22px;background:#2159a0"></div><div style="position:absolute;left:97px;top:492px;width:10px;height:22px;background:#296cbe"></div><div style="position:absolute;left:107px;top:492px;width:857px;height:22px;background:#fff"></div><div style="position:absolute;left:107px;top:513px;width:857px;height:1px;background-image:linear-gradient(90deg,#c9c9cf 3px,transparent 3px);background-size:5px 1px"></div><div style="position:absolute;left:235px;top:492px;width:1px;height:22px;background-image:linear-gradient(180deg,#c9c9cf 3px,transparent 3px);background-size:1px 5px"></div><div style="position:absolute;left:594px;top:492px;width:1px;height:22px;background-image:linear-gradient(180deg,#c9c9cf 3px,transparent 3px);background-size:1px 5px"></div><div style="position:absolute;left:728px;top:492px;width:1px;height:22px;background-image:linear-gradient(180deg,#c9c9cf 3px,transparent 3px);background-size:1px 5px"></div><div style="position:absolute;left:863px;top:492px;width:1px;height:22px;background-image:linear-gradient(180deg,#c9c9cf 3px,transparent 3px);background-size:1px 5px"></div><div style="position:absolute;left:109px;top:497px;width:9.4px;height:9.4px;border:1.6px solid #2a2a30;border-radius:1.5px"></div><div style="position:absolute;left:131px;top:495.0px;height:17px;line-height:17px;font-size:12.6px;color:#222228;font-weight:normal;white-space:nowrap;">02.02.03</div><div style="position:absolute;left:240px;top:495.0px;height:17px;line-height:17px;font-size:13px;color:#222228;font-weight:normal;white-space:nowrap;letter-spacing:0.02px">Устройство монолитной входной лестницы</div><div style="position:absolute;left:611px;top:495.0px;height:17px;line-height:17px;font-size:13px;color:#222228;font-weight:normal;white-space:nowrap;letter-spacing:-0.15px">28.05.2025 09:00</div><div style="position:absolute;left:747px;top:495.0px;height:17px;line-height:17px;font-size:13px;color:#222228;font-weight:normal;white-space:nowrap;letter-spacing:-0.15px">29.05.2025 18:00</div><div style="position:absolute;left:899.5px;top:495.0px;width:60px;height:17px;line-height:17px;text-align:right;font-size:13px;color:#222228;font-weight:normal;white-space:nowrap;">86</div><div style="position:absolute;left:45px;top:514px;width:21px;height:22px;background:#fff"></div><div style="position:absolute;left:43.5px;top:518.0px;width:24px;height:15px;line-height:15px;text-align:center;font-size:11px;color:#2a2a30;font-weight:normal;white-space:nowrap;">18</div><div style="position:absolute;left:67px;top:514px;width:10px;height:22px;background:#173864"></div><div style="position:absolute;left:77px;top:514px;width:10px;height:22px;background:#1c4a7f"></div><div style="position:absolute;left:87px;top:514px;width:10px;height:22px;background:#2159a0"></div><div style="position:absolute;left:97px;top:514px;width:867px;height:22px;background:#296cbe"></div><div style="position:absolute;left:97px;top:524px;width:10px;height:2px;background:#fff"></div><div style="position:absolute;left:109px;top:519px;width:9.4px;height:9.4px;border:1.6px solid #fff;border-radius:1.5px"></div><div style="position:absolute;left:130px;top:516px;width:103px;overflow:hidden;line-height:18px;font-size:12.5px;font-weight:bold;color:#fff;white-space:nowrap;letter-spacing:-0.3px;text-shadow:0 0 1px rgba(0,0,0,.35)">OP_syn.1.1.2.1.2.0</div><div style="position:absolute;left:240px;top:517.5px;height:16px;line-height:16px;font-size:12.5px;color:#fff;font-weight:bold;white-space:nowrap;letter-spacing:-0.2px;text-shadow:0 0 1px rgba(0,0,0,.35)">Монолитные работы надземной части</div><div style="position:absolute;left:611px;top:517.5px;height:16px;line-height:16px;font-size:12.5px;color:#fff;font-weight:bold;white-space:nowrap;letter-spacing:0.1px;text-shadow:0 0 1px rgba(0,0,0,.35)">26.05.2025 09:00</div><div style="position:absolute;left:747px;top:517.5px;height:16px;line-height:16px;font-size:12.5px;color:#fff;font-weight:bold;white-space:nowrap;letter-spacing:0.1px;text-shadow:0 0 1px rgba(0,0,0,.35)">21.06.2025 18:00</div><div style="position:absolute;left:899.5px;top:517.5px;width:60px;height:16px;line-height:16px;text-align:right;font-size:12.5px;color:#fff;font-weight:bold;white-space:nowrap;text-shadow:0 0 1px rgba(0,0,0,.35)">100</div><div style="position:absolute;left:45px;top:536px;width:21px;height:22px;background:#fff"></div><div style="position:absolute;left:43.5px;top:540.0px;width:24px;height:15px;line-height:15px;text-align:center;font-size:11px;color:#2a2a30;font-weight:normal;white-space:nowrap;">19</div><div style="position:absolute;left:67px;top:536px;width:10px;height:22px;background:#173864"></div><div style="position:absolute;left:77px;top:536px;width:10px;height:22px;background:#1c4a7f"></div><div style="position:absolute;left:87px;top:536px;width:10px;height:22px;background:#2159a0"></div><div style="position:absolute;left:97px;top:536px;width:10px;height:22px;background:#296cbe"></div><div style="position:absolute;left:107px;top:536px;width:857px;height:22px;background:#fff"></div><div style="position:absolute;left:107px;top:557px;width:857px;height:1px;background-image:linear-gradient(90deg,#c9c9cf 3px,transparent 3px);background-size:5px 1px"></div><div style="position:absolute;left:235px;top:536px;width:1px;height:22px;background-image:linear-gradient(180deg,#c9c9cf 3px,transparent 3px);background-size:1px 5px"></div><div style="position:absolute;left:594px;top:536px;width:1px;height:22px;background-image:linear-gradient(180deg,#c9c9cf 3px,transparent 3px);background-size:1px 5px"></div><div style="position:absolute;left:728px;top:536px;width:1px;height:22px;background-image:linear-gradient(180deg,#c9c9cf 3px,transparent 3px);background-size:1px 5px"></div><div style="position:absolute;left:863px;top:536px;width:1px;height:22px;background-image:linear-gradient(180deg,#c9c9cf 3px,transparent 3px);background-size:1px 5px"></div><div style="position:absolute;left:109px;top:541px;width:9.4px;height:9.4px;border:1.6px solid #2a2a30;border-radius:1.5px"></div><div style="position:absolute;left:131px;top:539.0px;height:17px;line-height:17px;font-size:12.6px;color:#222228;font-weight:normal;white-space:nowrap;">02.03.01</div><div style="position:absolute;left:240px;top:539.0px;height:17px;line-height:17px;font-size:13px;color:#222228;font-weight:normal;white-space:nowrap;letter-spacing:0.02px">Устройство наружных монолитных стен 1-го этажа</div><div style="position:absolute;left:611px;top:539.0px;height:17px;line-height:17px;font-size:13px;color:#222228;font-weight:normal;white-space:nowrap;letter-spacing:-0.15px">26.05.2025 09:00</div><div style="position:absolute;left:747px;top:539.0px;height:17px;line-height:17px;font-size:13px;color:#222228;font-weight:normal;white-space:nowrap;letter-spacing:-0.15px">27.05.2025 18:00</div><div style="position:absolute;left:899.5px;top:539.0px;width:60px;height:17px;line-height:17px;text-align:right;font-size:13px;color:#222228;font-weight:normal;white-space:nowrap;">49</div><div style="position:absolute;left:45px;top:558px;width:21px;height:22px;background:#fff"></div><div style="position:absolute;left:43.5px;top:562.0px;width:24px;height:15px;line-height:15px;text-align:center;font-size:11px;color:#2a2a30;font-weight:normal;white-space:nowrap;">20</div><div style="position:absolute;left:67px;top:558px;width:10px;height:22px;background:#173864"></div><div style="position:absolute;left:77px;top:558px;width:10px;height:22px;background:#1c4a7f"></div><div style="position:absolute;left:87px;top:558px;width:10px;height:22px;background:#2159a0"></div><div style="position:absolute;left:97px;top:558px;width:10px;height:22px;background:#296cbe"></div><div style="position:absolute;left:107px;top:558px;width:857px;height:22px;background:#fff"></div><div style="position:absolute;left:107px;top:579px;width:857px;height:1px;background-image:linear-gradient(90deg,#c9c9cf 3px,transparent 3px);background-size:5px 1px"></div><div style="position:absolute;left:235px;top:558px;width:1px;height:22px;background-image:linear-gradient(180deg,#c9c9cf 3px,transparent 3px);background-size:1px 5px"></div><div style="position:absolute;left:594px;top:558px;width:1px;height:22px;background-image:linear-gradient(180deg,#c9c9cf 3px,transparent 3px);background-size:1px 5px"></div><div style="position:absolute;left:728px;top:558px;width:1px;height:22px;background-image:linear-gradient(180deg,#c9c9cf 3px,transparent 3px);background-size:1px 5px"></div><div style="position:absolute;left:863px;top:558px;width:1px;height:22px;background-image:linear-gradient(180deg,#c9c9cf 3px,transparent 3px);background-size:1px 5px"></div><div style="position:absolute;left:109px;top:563px;width:9.4px;height:9.4px;border:1.6px solid #2a2a30;border-radius:1.5px"></div><div style="position:absolute;left:131px;top:561.0px;height:17px;line-height:17px;font-size:12.6px;color:#222228;font-weight:normal;white-space:nowrap;">02.03.02</div><div style="position:absolute;left:240px;top:561.0px;height:17px;line-height:17px;font-size:13px;color:#222228;font-weight:normal;white-space:nowrap;letter-spacing:0.02px">Устройство внутренних монолитных стен 1-го этажа</div><div style="position:absolute;left:611px;top:561.0px;height:17px;line-height:17px;font-size:13px;color:#222228;font-weight:normal;white-space:nowrap;letter-spacing:-0.15px">26.05.2025 09:00</div><div style="position:absolute;left:747px;top:561.0px;height:17px;line-height:17px;font-size:13px;color:#222228;font-weight:normal;white-space:nowrap;letter-spacing:-0.15px">27.05.2025 18:00</div><div style="position:absolute;left:899.5px;top:561.0px;width:60px;height:17px;line-height:17px;text-align:right;font-size:13px;color:#222228;font-weight:normal;white-space:nowrap;">32</div><div style="position:absolute;left:45px;top:580px;width:21px;height:22px;background:#fff"></div><div style="position:absolute;left:43.5px;top:584.0px;width:24px;height:15px;line-height:15px;text-align:center;font-size:11px;color:#2a2a30;font-weight:normal;white-space:nowrap;">21</div><div style="position:absolute;left:67px;top:580px;width:10px;height:22px;background:#173864"></div><div style="position:absolute;left:77px;top:580px;width:10px;height:22px;background:#1c4a7f"></div><div style="position:absolute;left:87px;top:580px;width:10px;height:22px;background:#2159a0"></div><div style="position:absolute;left:97px;top:580px;width:10px;height:22px;background:#296cbe"></div><div style="position:absolute;left:107px;top:580px;width:857px;height:22px;background:#fff"></div><div style="position:absolute;left:107px;top:601px;width:857px;height:1px;background-image:linear-gradient(90deg,#c9c9cf 3px,transparent 3px);background-size:5px 1px"></div><div style="position:absolute;left:235px;top:580px;width:1px;height:22px;background-image:linear-gradient(180deg,#c9c9cf 3px,transparent 3px);background-size:1px 5px"></div><div style="position:absolute;left:594px;top:580px;width:1px;height:22px;background-image:linear-gradient(180deg,#c9c9cf 3px,transparent 3px);background-size:1px 5px"></div><div style="position:absolute;left:728px;top:580px;width:1px;height:22px;background-image:linear-gradient(180deg,#c9c9cf 3px,transparent 3px);background-size:1px 5px"></div><div style="position:absolute;left:863px;top:580px;width:1px;height:22px;background-image:linear-gradient(180deg,#c9c9cf 3px,transparent 3px);background-size:1px 5px"></div><div style="position:absolute;left:109px;top:585px;width:9.4px;height:9.4px;border:1.6px solid #2a2a30;border-radius:1.5px"></div><div style="position:absolute;left:131px;top:583.0px;height:17px;line-height:17px;font-size:12.6px;color:#222228;font-weight:normal;white-space:nowrap;">02.03.03</div><div style="position:absolute;left:240px;top:583.0px;height:17px;line-height:17px;font-size:13px;color:#222228;font-weight:normal;white-space:nowrap;letter-spacing:0.02px">Устройство монолитной лестницы 1-го этажа</div><div style="position:absolute;left:611px;top:583.0px;height:17px;line-height:17px;font-size:13px;color:#222228;font-weight:normal;white-space:nowrap;letter-spacing:-0.15px">28.05.2025 09:00</div><div style="position:absolute;left:747px;top:583.0px;height:17px;line-height:17px;font-size:13px;color:#222228;font-weight:normal;white-space:nowrap;letter-spacing:-0.15px">02.06.2025 18:00</div><div style="position:absolute;left:899.5px;top:583.0px;width:60px;height:17px;line-height:17px;text-align:right;font-size:13px;color:#222228;font-weight:normal;white-space:nowrap;">73</div><div style="position:absolute;left:45px;top:602px;width:21px;height:17px;background:#fff"></div><div style="position:absolute;left:43.5px;top:606.0px;width:24px;height:15px;line-height:15px;text-align:center;font-size:11px;color:#2a2a30;font-weight:normal;white-space:nowrap;">22</div><div style="position:absolute;left:67px;top:602px;width:10px;height:17px;background:#173864"></div><div style="position:absolute;left:77px;top:602px;width:10px;height:17px;background:#1c4a7f"></div><div style="position:absolute;left:87px;top:602px;width:10px;height:17px;background:#2159a0"></div><div style="position:absolute;left:97px;top:602px;width:10px;height:17px;background:#296cbe"></div><div style="position:absolute;left:107px;top:602px;width:857px;height:17px;background:#fff"></div><div style="position:absolute;left:107px;top:623px;width:857px;height:1px;background-image:linear-gradient(90deg,#c9c9cf 3px,transparent 3px);background-size:5px 1px"></div><div style="position:absolute;left:235px;top:602px;width:1px;height:17px;background-image:linear-gradient(180deg,#c9c9cf 3px,transparent 3px);background-size:1px 5px"></div><div style="position:absolute;left:594px;top:602px;width:1px;height:17px;background-image:linear-gradient(180deg,#c9c9cf 3px,transparent 3px);background-size:1px 5px"></div><div style="position:absolute;left:728px;top:602px;width:1px;height:17px;background-image:linear-gradient(180deg,#c9c9cf 3px,transparent 3px);background-size:1px 5px"></div><div style="position:absolute;left:863px;top:602px;width:1px;height:17px;background-image:linear-gradient(180deg,#c9c9cf 3px,transparent 3px);background-size:1px 5px"></div><div style="position:absolute;left:109px;top:607px;width:9.4px;height:9.4px;border:1.6px solid #2a2a30;border-radius:1.5px"></div><div style="position:absolute;left:131px;top:605.0px;height:17px;line-height:17px;font-size:12.6px;color:#222228;font-weight:normal;white-space:nowrap;">02.03.04</div><div style="position:absolute;left:240px;top:605.0px;height:17px;line-height:17px;font-size:13px;color:#222228;font-weight:normal;white-space:nowrap;letter-spacing:0.02px">Устройство монолитного перекрытия 1-го этажа</div><div style="position:absolute;left:611px;top:605.0px;height:17px;line-height:17px;font-size:13px;color:#222228;font-weight:normal;white-space:nowrap;letter-spacing:-0.15px">03.06.2025 09:00</div><div style="position:absolute;left:747px;top:605.0px;height:17px;line-height:17px;font-size:13px;color:#222228;font-weight:normal;white-space:nowrap;letter-spacing:-0.15px">05.06.2025 18:00</div><div style="position:absolute;left:899.5px;top:605.0px;width:60px;height:17px;line-height:17px;text-align:right;font-size:13px;color:#222228;font-weight:normal;white-space:nowrap;">21</div><div style="position:absolute;left:66px;top:140px;width:1px;height:479px;background:#c8c8ce"></div><div style="position:absolute;left:593.5px;top:206.5px;width:135px;height:23px;box-sizing:border-box;border:3px solid #14284c;border-radius:5px;background:#fff"></div><div style="position:absolute;left:598px;top:209.5px;height:16px;line-height:16px;font-size:12.5px;color:#222;font-weight:normal;white-space:nowrap;letter-spacing:-0.3px">29.04.2025&nbsp; 09:00</div><svg style="position:absolute;left:698px;top:211px" width="26" height="13" viewBox="0 0 26 13"><circle cx="6.5" cy="6.5" r="4.5" fill="none" stroke="#9a9aa0" stroke-width="1"/><path d="M4.7 4.7L8.3 8.3M8.3 4.7L4.7 8.3" stroke="#9a9aa0" stroke-width="1"/><rect x="16.8" y="2.2" width="8" height="8.5" rx="1" fill="none" stroke="#333" stroke-width="1.2"/><rect x="16.8" y="2.2" width="8" height="1.8" fill="#333"/></svg><div style="position:absolute;left:964px;top:90px;width:9px;height:529px;background:#f4f4f6"></div><div style="position:absolute;left:966px;top:91px;width:6px;height:61px;background:#d9d9dd;border-radius:3px"></div><div style="position:absolute;left:973px;top:45px;width:6px;height:574px;background:#b3b3bb"></div><div style="position:absolute;left:984px;top:50px;width:173px;height:34px;box-sizing:border-box;background:#fff;border:1px solid #c2c2c8;border-radius:4px"></div><div style="position:absolute;left:995px;top:58.0px;height:19px;line-height:19px;font-size:15px;color:#1e1e24;font-weight:normal;white-space:nowrap;">Диаграмма Ганта</div><svg style="position:absolute;left:1128px;top:64px" width="12" height="7" viewBox="0 0 12 7"><path d="M0.5 0.5H11.5L6 6.5Z" fill="#3d3d45"/></svg><div style="position:absolute;left:979px;top:89px;width:939px;height:50px;background:#fff"></div><div style="position:absolute;left:979px;top:113px;width:939px;height:1px;background:#cbcbd1"></div><div style="position:absolute;left:979px;top:138px;width:939px;height:2px;background:#cbcbd1"></div><div style="position:absolute;left:1410.0px;top:92.5px;width:80px;height:17px;line-height:17px;text-align:center;font-size:13px;color:#2a2a30;font-weight:normal;white-space:nowrap;">2025</div><div style="position:absolute;left:961.0px;top:118.0px;width:100px;height:17px;line-height:17px;text-align:center;font-size:13px;color:#2a2a30;font-weight:normal;white-space:nowrap;">апр.</div><div style="position:absolute;left:1067px;top:114px;width:1px;height:24px;background:#cbcbd1"></div><div style="position:absolute;left:1075.0px;top:118.0px;width:100px;height:17px;line-height:17px;text-align:center;font-size:13px;color:#2a2a30;font-weight:normal;white-space:nowrap;">май</div><div style="position:absolute;left:1183px;top:114px;width:1px;height:24px;background:#cbcbd1"></div><div style="position:absolute;left:1189.0px;top:118.0px;width:100px;height:17px;line-height:17px;text-align:center;font-size:13px;color:#2a2a30;font-weight:normal;white-space:nowrap;">июнь</div><div style="position:absolute;left:1295px;top:114px;width:1px;height:24px;background:#cbcbd1"></div><div style="position:absolute;left:1303.0px;top:118.0px;width:100px;height:17px;line-height:17px;text-align:center;font-size:13px;color:#2a2a30;font-weight:normal;white-space:nowrap;">июль</div><div style="position:absolute;left:1411px;top:114px;width:1px;height:24px;background:#cbcbd1"></div><div style="position:absolute;left:1419.5px;top:118.0px;width:100px;height:17px;line-height:17px;text-align:center;font-size:13px;color:#2a2a30;font-weight:normal;white-space:nowrap;">авг.</div><div style="position:absolute;left:1528px;top:114px;width:1px;height:24px;background:#cbcbd1"></div><div style="position:absolute;left:1534.5px;top:118.0px;width:100px;height:17px;line-height:17px;text-align:center;font-size:13px;color:#2a2a30;font-weight:normal;white-space:nowrap;">сент.</div><div style="position:absolute;left:1641px;top:114px;width:1px;height:24px;background:#cbcbd1"></div><div style="position:absolute;left:1649.0px;top:118.0px;width:100px;height:17px;line-height:17px;text-align:center;font-size:13px;color:#2a2a30;font-weight:normal;white-space:nowrap;">окт.</div><div style="position:absolute;left:1757px;top:114px;width:1px;height:24px;background:#cbcbd1"></div><div style="position:absolute;left:1763.0px;top:118.0px;width:100px;height:17px;line-height:17px;text-align:center;font-size:13px;color:#2a2a30;font-weight:normal;white-space:nowrap;">нояб.</div><div style="position:absolute;left:1869px;top:114px;width:1px;height:24px;background:#cbcbd1"></div><div style="position:absolute;left:1877.0px;top:118.0px;width:100px;height:17px;line-height:17px;text-align:center;font-size:13px;color:#2a2a30;font-weight:normal;white-space:nowrap;">дек.</div><svg style="position:absolute;left:0;top:0" width="1918" height="908" viewBox="0 0 1918 908"><defs><clipPath id="gc"><rect x="979" y="140" width="939" height="479"/></clipPath></defs><g clip-path="url(#gc)"><rect x="979" y="140" width="939" height="479" fill="#fff"/><rect x="979" y="206" width="939" height="22" fill="#fdfbcf"/><path d="M979 161.5H1918" stroke="#d2d2d6" stroke-width="1" stroke-dasharray="1.5 3.5"/><path d="M979 183.5H1918" stroke="#d2d2d6" stroke-width="1" stroke-dasharray="1.5 3.5"/><path d="M979 205.5H1918" stroke="#d2d2d6" stroke-width="1" stroke-dasharray="1.5 3.5"/><path d="M979 227.5H1918" stroke="#d2d2d6" stroke-width="1" stroke-dasharray="1.5 3.5"/><path d="M979 249.5H1918" stroke="#d2d2d6" stroke-width="1" stroke-dasharray="1.5 3.5"/><path d="M979 271.5H1918" stroke="#d2d2d6" stroke-width="1" stroke-dasharray="1.5 3.5"/><path d="M979 293.5H1918" stroke="#d2d2d6" stroke-width="1" stroke-dasharray="1.5 3.5"/><path d="M979 315.5H1918" stroke="#d2d2d6" stroke-width="1" stroke-dasharray="1.5 3.5"/><path d="M979 337.5H1918" stroke="#d2d2d6" stroke-width="1" stroke-dasharray="1.5 3.5"/><path d="M979 359.5H1918" stroke="#d2d2d6" stroke-width="1" stroke-dasharray="1.5 3.5"/><path d="M979 381.5H1918" stroke="#d2d2d6" stroke-width="1" stroke-dasharray="1.5 3.5"/><path d="M979 403.5H1918" stroke="#d2d2d6" stroke-width="1" stroke-dasharray="1.5 3.5"/><path d="M979 425.5H1918" stroke="#d2d2d6" stroke-width="1" stroke-dasharray="1.5 3.5"/><path d="M979 447.5H1918" stroke="#d2d2d6" stroke-width="1" stroke-dasharray="1.5 3.5"/><path d="M979 469.5H1918" stroke="#d2d2d6" stroke-width="1" stroke-dasharray="1.5 3.5"/><path d="M979 491.5H1918" stroke="#d2d2d6" stroke-width="1" stroke-dasharray="1.5 3.5"/><path d="M979 513.5H1918" stroke="#d2d2d6" stroke-width="1" stroke-dasharray="1.5 3.5"/><path d="M979 535.5H1918" stroke="#d2d2d6" stroke-width="1" stroke-dasharray="1.5 3.5"/><path d="M979 557.5H1918" stroke="#d2d2d6" stroke-width="1" stroke-dasharray="1.5 3.5"/><path d="M979 579.5H1918" stroke="#d2d2d6" stroke-width="1" stroke-dasharray="1.5 3.5"/><path d="M979 601.5H1918" stroke="#d2d2d6" stroke-width="1" stroke-dasharray="1.5 3.5"/><path d="M1060.91925 143H2000V150.5L1996 147H1064.91925L1060.91925 150.5Z" fill="#a9a9ab"/><path d="M1060.91925 152H2000V160L1996 156H1064.91925L1060.91925 160Z" fill="#000"/><path d="M1060.91925 165H2000V172.5L1996 169H1064.91925L1060.91925 172.5Z" fill="#a9a9ab"/><path d="M1060.91925 174H2000V182L1996 178H1064.91925L1060.91925 182Z" fill="#000"/><path d="M1060.91925 187H1084.7745V194.5L1080.7745 191H1064.91925L1060.91925 194.5Z" fill="#a9a9ab"/><path d="M1060.91925 196H1084.7745V204L1080.7745 200H1064.91925L1060.91925 204Z" fill="#000"/><text x="1104.8" y="200.5" font-family="Liberation Sans" font-size="12" font-weight="bold" fill="#4a4a4e">Земляные работы</text><rect x="1060.67" y="211.75" width="9.39" height="5" fill="#dcdcdc" stroke="#979797" stroke-width="1.5"/><rect x="1060.92" y="219" width="8.89" height="7" fill="#22c493"/><rect x="1060.92" y="219" width="4.00" height="7" fill="#000"/><text x="1089.8" y="222.2" font-family="Liberation Sans" font-size="13" fill="#6a6a6e">Вертикальная планировка территории</text><rect x="1071.90" y="233.75" width="5.65" height="5" fill="#dcdcdc" stroke="#979797" stroke-width="1.5"/><rect x="1072.15" y="241" width="5.15" height="7" fill="#22c493"/><rect x="1072.15" y="241" width="4.00" height="7" fill="#1a73e8"/><text x="1097.3" y="244.2" font-family="Liberation Sans" font-size="13" fill="#6a6a6e">Устройство котлована</text><rect x="1079.38" y="255.75" width="5.65" height="5" fill="#dcdcdc" stroke="#979797" stroke-width="1.5"/><rect x="1079.63" y="263" width="5.15" height="7" fill="#22c493"/><rect x="1079.63" y="263" width="3.50" height="7" fill="#1a73e8"/><text x="1104.8" y="266.2" font-family="Liberation Sans" font-size="13" fill="#6a6a6e">Устройство песчаного основания</text><path d="M1087.11325 275H1414V282.5L1410 279H1091.11325L1087.11325 282.5Z" fill="#a9a9ab"/><path d="M1087.11325 284H1432.7805V292L1428.7805 288H1091.11325L1087.11325 292Z" fill="#000"/><text x="1452.8" y="288.5" font-family="Liberation Sans" font-size="12" font-weight="bold" fill="#4a4a4e">Общестроительные работы</text><path d="M1087.11325 297H1133.4205V304.5L1129.4205 301H1091.11325L1087.11325 304.5Z" fill="#a9a9ab"/><path d="M1087.11325 306H1133.4205V314L1129.4205 310H1091.11325L1087.11325 314Z" fill="#000"/><text x="1153.4" y="310.5" font-family="Liberation Sans" font-size="12" font-weight="bold" fill="#4a4a4e">Фундамент</text><rect x="1086.86" y="321.75" width="5.65" height="5" fill="#dcdcdc" stroke="#979797" stroke-width="1.5"/><rect x="1087.11" y="329" width="5.15" height="7" fill="#22c493"/><rect x="1087.11" y="329" width="3.00" height="7" fill="#1a73e8"/><text x="1112.3" y="332.2" font-family="Liberation Sans" font-size="13" fill="#6a6a6e">Устройство буронабивных свай захватка 1</text><rect x="1094.35" y="343.75" width="5.65" height="5" fill="#dcdcdc" stroke="#979797" stroke-width="1.5"/><rect x="1094.60" y="351" width="5.15" height="7" fill="#22c493"/><rect x="1094.60" y="351" width="1.50" height="7" fill="#1a73e8"/><text x="1119.7" y="354.2" font-family="Liberation Sans" font-size="13" fill="#6a6a6e">Устройство буронабивных свай захватка 2</text><rect x="1101.83" y="365.75" width="5.65" height="5" fill="#dcdcdc" stroke="#979797" stroke-width="1.5"/><rect x="1102.08" y="373" width="5.15" height="7" fill="#22c493"/><rect x="1102.08" y="373" width="4.50" height="7" fill="#1a73e8"/><text x="1127.2" y="376.2" font-family="Liberation Sans" font-size="13" fill="#6a6a6e">Устройство буронабивных свай захватка 3</text><rect x="1109.32" y="387.75" width="5.65" height="5" fill="#dcdcdc" stroke="#979797" stroke-width="1.5"/><rect x="1109.57" y="395" width="5.15" height="7" fill="#22c493"/><rect x="1109.57" y="395" width="3.20" height="7" fill="#1a73e8"/><text x="1134.7" y="398.2" font-family="Liberation Sans" font-size="13" fill="#6a6a6e">Устройство буронабивных свай захватка 4</text><rect x="1116.80" y="409.75" width="16.87" height="5" fill="#dcdcdc" stroke="#979797" stroke-width="1.5"/><rect x="1117.05" y="417" width="16.37" height="7" fill="#22c493"/><rect x="1117.05" y="417" width="2.00" height="7" fill="#1a73e8"/><text x="1153.4" y="420.2" font-family="Liberation Sans" font-size="13" fill="#6a6a6e">Устройство фундаментной плиты</text><path d="M1135.75925 429H1174.5825V436.5L1170.5825 433H1139.75925L1135.75925 436.5Z" fill="#a9a9ab"/><path d="M1135.75925 438H1174.5825V446L1170.5825 442H1139.75925L1135.75925 446Z" fill="#000"/><text x="1194.6" y="442.5" font-family="Liberation Sans" font-size="12" font-weight="bold" fill="#4a4a4e">Монолитные работы подземной части</text><rect x="1135.51" y="453.75" width="5.65" height="5" fill="#dcdcdc" stroke="#979797" stroke-width="1.5"/><rect x="1135.76" y="461" width="5.15" height="7" fill="#22c493"/><rect x="1135.76" y="461" width="2.50" height="7" fill="#1a73e8"/><text x="1160.9" y="464.2" font-family="Liberation Sans" font-size="13" fill="#6a6a6e">Устройство монолитных стен цокольного этажа</text><rect x="1142.99" y="475.75" width="16.87" height="5" fill="#dcdcdc" stroke="#979797" stroke-width="1.5"/><rect x="1143.24" y="483" width="16.37" height="7" fill="#22c493"/><rect x="1143.24" y="483" width="4.00" height="7" fill="#1a73e8"/><text x="1179.6" y="486.2" font-family="Liberation Sans" font-size="13" fill="#6a6a6e">Устройство монолитного перекрытия цокольного этажа</text><rect x="1169.19" y="497.75" width="5.65" height="5" fill="#dcdcdc" stroke="#979797" stroke-width="1.5"/><rect x="1169.44" y="505" width="5.15" height="7" fill="#22c493"/><rect x="1169.44" y="505" width="4.50" height="7" fill="#1a73e8"/><text x="1194.6" y="508.2" font-family="Liberation Sans" font-size="13" fill="#6a6a6e">Устройство монолитной входной лестницы</text><path d="M1161.95325 517H1264.1485V524.5L1260.1485 521H1165.95325L1161.95325 524.5Z" fill="#a9a9ab"/><path d="M1161.95325 526H1260.6485V534L1256.6485 530H1165.95325L1161.95325 534Z" fill="#000"/><text x="1284.1" y="530.5" font-family="Liberation Sans" font-size="12" font-weight="bold" fill="#4a4a4e">Монолитные работы надземной части</text><rect x="1161.70" y="541.75" width="5.65" height="5" fill="#dcdcdc" stroke="#979797" stroke-width="1.5"/><rect x="1161.95" y="549" width="5.15" height="7" fill="#22c493"/><rect x="1161.95" y="549" width="2.80" height="7" fill="#1a73e8"/><text x="1187.1" y="552.2" font-family="Liberation Sans" font-size="13" fill="#6a6a6e">Устройство наружных монолитных стен 1-го этажа</text><rect x="1161.70" y="563.75" width="5.65" height="5" fill="#dcdcdc" stroke="#979797" stroke-width="1.5"/><rect x="1161.95" y="571" width="5.15" height="7" fill="#22c493"/><rect x="1161.95" y="571" width="2.00" height="7" fill="#1a73e8"/><text x="1187.1" y="574.2" font-family="Liberation Sans" font-size="13" fill="#6a6a6e">Устройство внутренних монолитных стен 1-го этажа</text><rect x="1169.19" y="585.75" width="20.61" height="5" fill="#dcdcdc" stroke="#979797" stroke-width="1.5"/><rect x="1169.44" y="593" width="20.11" height="7" fill="#22c493"/><rect x="1169.44" y="593" width="14.00" height="7" fill="#1a73e8"/><text x="1209.6" y="596.2" font-family="Liberation Sans" font-size="13" fill="#6a6a6e">Устройство монолитной лестницы 1-го этажа</text><rect x="1191.64" y="607.75" width="9.39" height="5" fill="#dcdcdc" stroke="#979797" stroke-width="1.5"/><rect x="1191.89" y="615" width="8.89" height="7" fill="#22c493"/><rect x="1191.89" y="615" width="2.00" height="7" fill="#1a73e8"/><text x="1220.8" y="618.2" font-family="Liberation Sans" font-size="13" fill="#6a6a6e">Устройство монолитного перекрытия 1-го этажа</text><path d="M1069.8 222V229H1058.1V244.5H1066.1" fill="none" stroke="#000" stroke-width="1.7" stroke-linejoin="miter"/><path d="M1064.6 240.0L1072.6 244.5L1064.6 249.0Z" fill="#000"/><path d="M1077.3 244V251H1065.6V266.5H1073.6" fill="none" stroke="#000" stroke-width="1.7" stroke-linejoin="miter"/><path d="M1072.1 262.0L1080.1 266.5L1072.1 271.0Z" fill="#000"/><path d="M1084.8 266V273H1073.1V332.5H1081.1" fill="none" stroke="#000" stroke-width="1.7" stroke-linejoin="miter"/><path d="M1079.6 328.0L1087.6 332.5L1079.6 337.0Z" fill="#000"/><path d="M1092.3 332V339H1080.6V354.5H1088.6" fill="none" stroke="#000" stroke-width="1.7" stroke-linejoin="miter"/><path d="M1087.1 350.0L1095.1 354.5L1087.1 359.0Z" fill="#000"/><path d="M1099.7 354V361H1088.1V376.5H1096.1" fill="none" stroke="#000" stroke-width="1.7" stroke-linejoin="miter"/><path d="M1094.6 372.0L1102.6 376.5L1094.6 381.0Z" fill="#000"/><path d="M1107.2 376V383H1095.6V398.5H1103.6" fill="none" stroke="#000" stroke-width="1.7" stroke-linejoin="miter"/><path d="M1102.1 394.0L1110.1 398.5L1102.1 403.0Z" fill="#000"/><path d="M1114.7 398V405H1103.0V420.5H1111.0" fill="none" stroke="#000" stroke-width="1.7" stroke-linejoin="miter"/><path d="M1109.5 416.0L1117.5 420.5L1109.5 425.0Z" fill="#000"/><path d="M1133.4 420V427H1121.8V464.5H1129.8" fill="none" stroke="#000" stroke-width="1.7" stroke-linejoin="miter"/><path d="M1128.3 460.0L1136.3 464.5L1128.3 469.0Z" fill="#000"/><path d="M1140.9 464V471H1129.2V486.5H1137.2" fill="none" stroke="#000" stroke-width="1.7" stroke-linejoin="miter"/><path d="M1135.7 482.0L1143.7 486.5L1135.7 491.0Z" fill="#000"/><path d="M1159.6 486V493H1148.0V552.5H1156.0" fill="none" stroke="#000" stroke-width="1.7" stroke-linejoin="miter"/><path d="M1154.5 548.0L1162.5 552.5L1154.5 557.0Z" fill="#000"/><path d="M1167.1 549V540H1155.4V508.5H1163.4" fill="none" stroke="#000" stroke-width="1.7" stroke-linejoin="miter"/><path d="M1161.9 504.0L1169.9 508.5L1161.9 513.0Z" fill="#000"/><path d="M1167.1 552V559H1148.0V574.5H1156.0" fill="none" stroke="#000" stroke-width="1.7" stroke-linejoin="miter"/><path d="M1154.5 570.0L1162.5 574.5L1154.5 579.0Z" fill="#000"/><path d="M1167.1 574V581H1155.4V596.5H1163.4" fill="none" stroke="#000" stroke-width="1.7" stroke-linejoin="miter"/><path d="M1161.9 592.0L1169.9 596.5L1161.9 601.0Z" fill="#000"/><path d="M1189.6 596V603H1177.9V618.5H1185.9" fill="none" stroke="#000" stroke-width="1.7" stroke-linejoin="miter"/><path d="M1184.4 614.0L1192.4 618.5L1184.4 623.0Z" fill="#000"/><path d="M1174.6 508.5H1184.6" stroke="#000" stroke-width="1.5"/><path d="M1180.6 504.0L1188.6 508.5L1180.6 513.0Z" fill="#000"/><path d="M1189.1 503.5V513.5" stroke="#000" stroke-width="1.5"/><path d="M1347.5 148V619" stroke="#f23f5e" stroke-width="2" stroke-dasharray="6 4"/><path d="M1342.5 140H1352.5L1347.5 148Z" fill="#f23f5e"/><path d="M1616 148V619" stroke="#1e82e6" stroke-width="2" stroke-dasharray="6 4"/><path d="M1611 140H1621L1616 148Z" fill="#1e82e6"/><text transform="translate(1351 142) rotate(90)" font-family="Liberation Sans" font-size="11" fill="#7a7a80">Дата актуализации</text><text transform="translate(1619.5 142) rotate(90)" font-family="Liberation Sans" font-size="11" fill="#7a7a80">Текущая дата</text><rect x="1915" y="140" width="3" height="479" fill="#fff"/><rect x="1915.5" y="141" width="2.5" height="50" fill="#d4d4d8"/></g></svg><div style="position:absolute;left:45px;top:618px;width:1873px;height:6.6px;background:#b3b3bb"></div><div style="position:absolute;left:45px;top:625px;width:1873px;height:283px;background:#fff"></div><div style="position:absolute;left:93px;top:637.0px;height:21px;line-height:21px;font-size:17.3px;color:#1976d2;font-weight:normal;white-space:nowrap;letter-spacing:0.1px">Карточка работы</div><div style="position:absolute;left:325px;top:637.0px;height:21px;line-height:21px;font-size:17.3px;color:#2e2e34;font-weight:normal;white-space:nowrap;letter-spacing:0.1px">Связи работы</div><div style="position:absolute;left:531px;top:637.0px;height:21px;line-height:21px;font-size:17.3px;color:#2e2e34;font-weight:normal;white-space:nowrap;letter-spacing:0.1px">Связанные графики</div><div style="position:absolute;left:787px;top:637.0px;height:21px;line-height:21px;font-size:17.3px;color:#2e2e34;font-weight:normal;white-space:nowrap;letter-spacing:0.1px">Справочники</div><div style="position:absolute;left:989px;top:637.0px;height:21px;line-height:21px;font-size:17.3px;color:#2e2e34;font-weight:normal;white-space:nowrap;letter-spacing:0.1px">Суточное планирование</div><div style="position:absolute;left:1280px;top:637.0px;height:21px;line-height:21px;font-size:17.3px;color:#2e2e34;font-weight:normal;white-space:nowrap;letter-spacing:0.1px">Фото / Документация</div><div style="position:absolute;left:1549px;top:637.0px;height:21px;line-height:21px;font-size:17.3px;color:#2e2e34;font-weight:normal;white-space:nowrap;letter-spacing:0.1px">Запросы и поручения</div><div style="position:absolute;left:1818px;top:637.0px;height:21px;line-height:21px;font-size:17.3px;color:#2e2e34;font-weight:normal;white-space:nowrap;letter-spacing:0.1px">Табели</div><div style="position:absolute;left:45px;top:666px;width:232px;height:2.5px;background:#1976d2"></div><div style="position:absolute;left:61px;top:687.0px;height:18px;line-height:18px;font-size:14px;color:#111;font-weight:bold;white-space:nowrap;">Тип</div><div style="position:absolute;left:61px;top:717.0px;height:18px;line-height:18px;font-size:14px;color:#111;font-weight:bold;white-space:nowrap;">Шифр</div><div style="position:absolute;left:61px;top:747.0px;height:18px;line-height:18px;font-size:14px;color:#111;font-weight:bold;white-space:nowrap;">Статус</div><div style="position:absolute;left:121px;top:685px;width:162px;height:22px;box-sizing:border-box;background:#fff;border:1px solid #b9b9bf;border-radius:4px"></div><div style="position:absolute;left:133px;top:685.0px;height:19px;line-height:19px;font-size:15px;color:#1e1e24;font-weight:normal;white-space:nowrap;">Работа</div><svg style="position:absolute;left:253px;top:693.0px" width="12" height="7" viewBox="0 0 12 7"><path d="M0.5 0.5H11.5L6 6.5Z" fill="#3d3d45"/></svg><div style="position:absolute;left:121px;top:715px;width:162px;height:22px;box-sizing:border-box;background:#fff;border:1px solid #b9b9bf;border-radius:4px"></div><div style="position:absolute;left:133px;top:715.0px;height:19px;line-height:19px;font-size:15px;color:#1e1e24;font-weight:normal;white-space:nowrap;">01.01</div><div style="position:absolute;left:121px;top:745px;width:162px;height:22px;box-sizing:border-box;background:#fff;border:1px solid #b9b9bf;border-radius:4px"></div><div style="position:absolute;left:133px;top:745.0px;height:19px;line-height:19px;font-size:15px;color:#1e1e24;font-weight:normal;white-space:nowrap;">Выполняется</div><svg style="position:absolute;left:253px;top:753.0px" width="12" height="7" viewBox="0 0 12 7"><path d="M0.5 0.5H11.5L6 6.5Z" fill="#3d3d45"/></svg><div style="position:absolute;left:291px;top:685px;width:530px;height:50px;box-sizing:border-box;border:1px solid #b9b9bf;border-radius:5px;background:#fff"></div><div style="position:absolute;left:304px;top:696.5px;height:22px;line-height:22px;font-size:18.3px;color:#111;font-weight:bold;white-space:nowrap;">Вертикальная планировка территории</div><div style="position:absolute;left:292px;top:745.5px;height:19px;line-height:19px;font-size:15px;color:#1e1e24;font-weight:normal;white-space:nowrap;">Сценарий</div><div style="position:absolute;left:364px;top:743px;width:457px;height:22px;background:#efeff2;border-radius:5px"></div><div style="position:absolute;left:482px;top:745.5px;height:18px;line-height:18px;font-size:14px;color:#1e1e24;font-weight:normal;white-space:nowrap;">Сценария нет</div><svg style="position:absolute;left:797px;top:744px" width="21" height="21" viewBox="0 0 21 21"><path d="M10.5 2.2L12.7 3.8L15.4 3.6L16.3 6.1L18.6 7.6L17.8 10.3L18.6 13L16.3 14.5L15.4 17L12.7 16.8L10.5 18.4L8.3 16.8L5.6 17L4.7 14.5L2.4 13L3.2 10.3L2.4 7.6L4.7 6.1L5.6 3.6L8.3 3.8Z" fill="none" stroke="#222" stroke-width="1.5"/><path d="M7.5 7.3L10 10.3L7.5 13.3M10.5 7.3L13 10.3L10.5 13.3" fill="none" stroke="#222" stroke-width="1.5"/></svg><div style="position:absolute;left:829px;top:685px;width:146px;height:82px;box-sizing:border-box;border:1.5px solid #1976d2;border-radius:5px;background:#fff;overflow:hidden"><div style="position:absolute;left:0px;top:0px;width:146px;height:33px;background:#1976d2"></div></div><div style="position:absolute;left:860px;top:677px;width:10px;height:15px;box-sizing:border-box;background:#fff;border:1.5px solid #1976d2;border-radius:3px"></div><div style="position:absolute;left:933px;top:677px;width:10px;height:15px;box-sizing:border-box;background:#fff;border:1.5px solid #1976d2;border-radius:3px"></div><div style="position:absolute;left:832.0px;top:693.5px;width:140px;height:18px;line-height:18px;text-align:center;font-size:13.5px;color:#fff;font-weight:normal;white-space:nowrap;text-decoration:underline">PLAN-R: 7 дней</div><svg style="position:absolute;left:840px;top:724px" width="20" height="20" viewBox="0 0 20 20"><path d="M3.5 3.5L10.5 10.5M1.8 5.2L5.2 1.8" fill="none" stroke="#555" stroke-width="1.5" stroke-linecap="round"/><path d="M9.5 9.2L12.2 8.3C13.8 9.2 16.5 12 17.6 14.2L17.8 17.8L14.2 17.6C12 16.5 9.2 13.8 8.3 12.2Z" fill="none" stroke="#555" stroke-width="1.5" stroke-linejoin="round"/></svg><div style="position:absolute;left:866px;top:723px;width:71px;height:22px;box-sizing:border-box;border:1px solid #b9b9bf;border-radius:4px;background:#fff"></div><div style="position:absolute;left:871.5px;top:724.0px;width:60px;height:19px;line-height:19px;text-align:center;font-size:15px;color:#111;font-weight:normal;white-space:nowrap;">24</div><div style="position:absolute;left:946px;top:726.5px;height:16px;line-height:16px;font-size:12px;color:#333;font-weight:normal;white-space:nowrap;">ч.</div><div style="position:absolute;left:829.5px;top:747.5px;width:145px;height:16px;line-height:16px;text-align:center;font-size:12.5px;color:#1e1e24;font-weight:normal;white-space:nowrap;letter-spacing:0.1px">Календарных: 3 дн.</div><div style="position:absolute;left:53px;top:775px;width:922px;height:23px;background:#21c595;border-radius:3px"></div><div style="position:absolute;left:53px;top:775px;width:250px;height:23px;background:#1a72d4;border-radius:3px"></div><div style="position:absolute;left:72px;top:777.0px;height:20px;line-height:20px;font-size:15.5px;color:#fff;font-weight:normal;white-space:nowrap;letter-spacing:0.3px">29.04.2025 09:00</div><div style="position:absolute;left:482.0px;top:777.5px;width:80px;height:19px;line-height:19px;text-align:center;font-size:15px;color:#fff;font-weight:normal;white-space:nowrap;">27 %</div><div style="position:absolute;left:821px;top:777.0px;height:20px;line-height:20px;font-size:15.5px;color:#fff;font-weight:normal;white-space:nowrap;letter-spacing:0.3px">01.05.2025 18:00</div><svg style="position:absolute;left:204px;top:780px" width="12" height="13" viewBox="0 0 12 13"><rect x="1" y="1.5" width="10" height="10.5" rx="1" fill="none" stroke="#fff" stroke-width="1.4"/><rect x="1" y="1.5" width="10" height="2.8" fill="#fff"/></svg><svg style="position:absolute;left:952px;top:780px" width="12" height="13" viewBox="0 0 12 13"><rect x="1" y="1.5" width="10" height="10.5" rx="1" fill="none" stroke="#fff" stroke-width="1.4"/><rect x="1" y="1.5" width="10" height="2.8" fill="#fff"/></svg><div style="position:absolute;left:53px;top:815.5px;height:18px;line-height:18px;font-size:14px;color:#111;font-weight:bold;white-space:nowrap;">Ограничения</div><div style="position:absolute;left:206px;top:822px;width:768px;height:3px;background:#b2b2b8"></div><div style="position:absolute;left:53px;top:843.0px;height:18px;line-height:18px;font-size:14.5px;color:#222;font-weight:normal;white-space:nowrap;">Начало</div><div style="position:absolute;left:120px;top:840px;width:149px;height:22px;box-sizing:border-box;background:#fff;border:1px solid #b9b9bf;border-radius:4px"></div><svg style="position:absolute;left:240px;top:848.0px" width="12" height="7" viewBox="0 0 12 7"><path d="M0.5 0.5H11.5L6 6.5Z" fill="#3d3d45"/></svg><div style="position:absolute;left:729px;top:843.0px;height:18px;line-height:18px;font-size:14.5px;color:#222;font-weight:normal;white-space:nowrap;">Окончание</div><div style="position:absolute;left:821px;top:840px;width:150px;height:22px;box-sizing:border-box;background:#fff;border:1px solid #b9b9bf;border-radius:4px"></div><svg style="position:absolute;left:940px;top:848.0px" width="12" height="7" viewBox="0 0 12 7"><path d="M0.5 0.5H11.5L6 6.5Z" fill="#3d3d45"/></svg><div style="position:absolute;left:53px;top:878px;width:40px;height:20px;background:#1976d2;border-radius:4px;box-shadow:0 1px 2px rgba(0,0,0,.35)"></div><svg style="position:absolute;left:64px;top:881px" width="18" height="14" viewBox="0 0 18 14"><path d="M8 1.5L3 7L8 12.5M13.5 1.5L8.5 7L13.5 12.5" fill="none" stroke="#fff" stroke-width="1.4"/></svg><div style="position:absolute;left:109.5px;top:880.0px;height:19px;line-height:19px;font-size:15px;color:#222;font-weight:normal;white-space:nowrap;">Начало как можно раньше</div><div style="position:absolute;left:718.5px;top:880.0px;height:19px;line-height:19px;font-size:15.3px;color:#222;font-weight:normal;white-space:nowrap;">Окончание как можно позже</div><div style="position:absolute;left:935px;top:878px;width:40px;height:20px;background:#9d9da3;border-radius:4px;box-shadow:0 1px 2px rgba(0,0,0,.3)"></div><svg style="position:absolute;left:946px;top:881px" width="18" height="14" viewBox="0 0 18 14"><path d="M4.5 1.5L9.5 7L4.5 12.5M10 1.5L15 7L10 12.5" fill="none" stroke="#fff" stroke-width="1.4"/></svg><div style="position:absolute;left:983px;top:677px;width:1px;height:231px;background:#c4c4ca"></div><div style="position:absolute;left:992px;top:696.0px;height:18px;line-height:18px;font-size:14px;color:#111;font-weight:bold;white-space:nowrap;">Атрибуты</div><div style="position:absolute;left:1082px;top:685px;width:832px;height:40px;box-sizing:border-box;border:1px solid #b9b9bf;border-radius:4px;background:#fff"></div><div style="position:absolute;left:1094px;top:695.0px;height:19px;line-height:19px;font-size:15px;color:#6e6e76;font-weight:normal;white-space:nowrap;">Поиск</div><div style="position:absolute;left:992px;top:745.0px;height:19px;line-height:19px;font-size:15px;color:#1e1e24;font-weight:normal;white-space:nowrap;">Шифр</div><div style="position:absolute;left:1458px;top:745.0px;height:19px;line-height:19px;font-size:15.3px;color:#1e1e24;font-weight:normal;white-space:nowrap;">01.01</div><div style="position:absolute;left:988px;top:775.5px;width:930px;height:1px;background:#c0c0c6"></div><div style="position:absolute;left:992px;top:787.0px;height:19px;line-height:19px;font-size:15px;color:#1e1e24;font-weight:normal;white-space:nowrap;">Наименование</div><div style="position:absolute;left:1458px;top:787.0px;height:19px;line-height:19px;font-size:15.3px;color:#1e1e24;font-weight:normal;white-space:nowrap;">Вертикальная планировка территории</div><div style="position:absolute;left:988px;top:817.5px;width:930px;height:1px;background:#c0c0c6"></div><div style="position:absolute;left:992px;top:829.0px;height:19px;line-height:19px;font-size:15px;color:#1e1e24;font-weight:normal;white-space:nowrap;">Старт</div><div style="position:absolute;left:1458px;top:829.0px;height:19px;line-height:19px;font-size:15.3px;color:#1e1e24;font-weight:normal;white-space:nowrap;">29.04.2025 09:00</div><div style="position:absolute;left:988px;top:859.5px;width:930px;height:1px;background:#c0c0c6"></div><div style="position:absolute;left:992px;top:871.0px;height:19px;line-height:19px;font-size:15px;color:#1e1e24;font-weight:normal;white-space:nowrap;">Финиш</div><div style="position:absolute;left:1458px;top:871.0px;height:19px;line-height:19px;font-size:15.3px;color:#1e1e24;font-weight:normal;white-space:nowrap;">01.05.2025 18:00</div><div style="position:absolute;left:988px;top:901.5px;width:930px;height:1px;background:#c0c0c6"></div><svg style="position:absolute;left:0;top:0" width="1918" height="908" viewBox="0 0 1918 908"><ellipse cx="505.5" cy="217.4" rx="15.3" ry="17.8" fill="#fff" stroke="#000" stroke-width="3"/><path d="M521 218H580" stroke="#000" stroke-width="3"/><path d="M578.5 212.6L591 218L578.5 223.4Z" fill="#000"/><ellipse cx="905.5" cy="837.5" rx="16" ry="18" fill="#fff" stroke="#000" stroke-width="3"/><path d="M922 837.5H980" stroke="#000" stroke-width="3"/><path d="M977 831.5L990 837.5L977 843.5Z" fill="#000"/></svg><div style="position:absolute;left:490.5px;top:205.0px;width:30px;height:26px;line-height:26px;text-align:center;font-size:22px;color:#000;font-weight:normal;white-space:nowrap;">1</div><div style="position:absolute;left:890.5px;top:826.0px;width:30px;height:26px;line-height:26px;text-align:center;font-size:22px;color:#000;font-weight:normal;white-space:nowrap;">2</div><svg style="position:absolute;left:0;top:0" width="1918" height="908" viewBox="0 0 1918 908"><g fill="none" stroke="#3d3d45" stroke-width="2.2" stroke-linecap="round" stroke-linejoin="round"><path d="M12.5 32V20.5L22 13.5L31.5 20.5V32"/><path d="M10.5 32.5H33.5"/><path d="M19.5 32V28.5a2.5 2.5 0 0 1 5 0V32"/></g><g fill="none" stroke="#3d3d45" stroke-width="2" stroke-linecap="round" stroke-linejoin="round"><circle cx="22" cy="67" r="11"/><path d="M12 63H32M12 71H32"/><ellipse cx="22" cy="67" rx="4.8" ry="11"/></g><g fill="none" stroke="#ffffff" stroke-width="2.2" stroke-linecap="round" stroke-linejoin="round"><path d="M11 103H24.5M15.5 111H28.5M20 119H33.5"/></g><g fill="none" stroke="#3d3d45" stroke-width="2" stroke-linecap="round" stroke-linejoin="round"><rect x="10.5" y="143" width="23" height="23" rx="3"/><path d="M16.5 148.5V160M22.5 148.5V155M28.5 148.5V160"/></g><g fill="none" stroke="#3d3d45" stroke-width="2" stroke-linecap="round" stroke-linejoin="round"><path d="M11 192.5C13.5 188 17.5 187 21.5 189.5S30 192.5 33.5 187.5"/><rect x="11" y="201" width="7" height="9"/><rect x="18" y="195" width="8" height="15"/><rect x="26" y="201" width="7.5" height="9"/></g><g fill="none" stroke="#3d3d45" stroke-width="2.2" stroke-linecap="round" stroke-linejoin="round"><rect x="10.5" y="241" width="17" height="13" rx="2.5"/><path d="M15.5 236V234a2.5 2.5 0 0 1 2.5-2.5H31a2.5 2.5 0 0 1 2.5 2.5V243.5a2.5 2.5 0 0 1-2.5 2.5H27.5"/><path d="M11 245.5H27"/><path d="M16 235H33"/></g><g fill="none" stroke="#3d3d45" stroke-width="2" stroke-linecap="round" stroke-linejoin="round"><path d="M11 299V278C17 274 22 279 26 281C29 283 31 281 33 279V293C31 296 28 296 25 294C21 291 16 289 11 293"/></g><g fill="none" stroke="#3d3d45" stroke-width="2.2" stroke-linecap="round" stroke-linejoin="round"><path d="M10.5 320.5H33.5M10.5 342H33.5"/><path d="M12 327L17 336.5M18.5 327L23.5 336.5M25 327L30 336.5"/></g><g fill="none" stroke="#3d3d45" stroke-width="2" stroke-linecap="round" stroke-linejoin="round"><rect x="10.5" y="363.5" width="9.5" height="9.5"/><rect x="24" y="363.5" width="9.5" height="9.5"/><rect x="10.5" y="377" width="9.5" height="9.5"/><rect x="24" y="377" width="9.5" height="9.5"/></g><g fill="none" stroke="#3d3d45" stroke-width="2" stroke-linecap="round" stroke-linejoin="round"><ellipse cx="22" cy="411" rx="11" ry="4.5"/><path d="M11 411V429C11 431.5 16 433.5 22 433.5C28 433.5 33 431.5 33 429V411"/><path d="M11 417C11 419.5 16 421.5 22 421.5C28 421.5 33 419.5 33 417"/><path d="M11 423C11 425.5 16 427.5 22 427.5C28 427.5 33 425.5 33 423"/></g><g fill="none" stroke="#3d3d45" stroke-width="2" stroke-linecap="round" stroke-linejoin="round"><path d="M13.5 453H11V475.5H13.5M30.5 453H33V475.5H30.5"/><path d="M16.5 472L22 456L27.5 472M18.5 466.5H25.5"/></g><g fill="none" stroke="#3d3d45" stroke-width="2" stroke-linecap="round" stroke-linejoin="round"><rect x="11.5" y="499" width="21" height="20" rx="2.5"/><path d="M11.5 504.5H32.5M16 496.5V500M28 496.5V500"/></g><g fill="#3d3d45"><rect x="15.5" y="508" width="2" height="2"/><rect x="21" y="508" width="2" height="2"/><rect x="26.5" y="508" width="2" height="2"/><rect x="15.5" y="513" width="2" height="2"/><rect x="21" y="513" width="2" height="2"/><rect x="26.5" y="513" width="2" height="2"/></g><g fill="none" stroke="#3d3d45" stroke-width="2" stroke-linecap="round" stroke-linejoin="round"><path d="M10.5 552C13.5 546.5 17.5 544 22 544C26.5 544 30.5 546.5 33.5 552C30.5 557.5 26.5 560 22 560C17.5 560 13.5 557.5 10.5 552Z"/><circle cx="22" cy="552" r="2.8"/></g><g fill="none" stroke="#3d3d45" stroke-width="2" stroke-linecap="round" stroke-linejoin="round"><circle cx="22" cy="716" r="4.5"/><path d="M22 705V707.5M22 724.5V727M11 716H13.5M30.5 716H33M14.2 708.2L16 710M28 722L29.8 723.8M14.2 723.8L16 722M28 710L29.8 708.2"/></g><g fill="none" stroke="#3d3d45" stroke-width="2" stroke-linecap="round" stroke-linejoin="round"><path d="M11 770V751.5a2 2 0 0 1 2-2H31.5a2 2 0 0 1 2 2V765a2 2 0 0 1-2 2H14.5Z"/><path d="M15.5 754.2H28.5M15.5 758.2H28.5M15.5 762H23.5"/></g><g fill="none" stroke="#3d3d45" stroke-width="2" stroke-linecap="round" stroke-linejoin="round"><path d="M14 808.5V801.5a8 8 0 0 1 16 0V808.5a1.5 1.5 0 0 1 1.5 1.5H12.5a1.5 1.5 0 0 1 1.5-1.5Z"/><path d="M19 810.5a3 3 0 0 0 6 0"/></g><g fill="none" stroke="#3d3d45" stroke-width="2" stroke-linecap="round" stroke-linejoin="round"><path d="M10.5 840.5H27.5M19.1 837.5V840.5M23.5 841C21.5 846.5 17.5 851 13.3 854M14.7 843.6L22 851.5"/><path d="M23.2 858L27.9 846.6L33.2 858M24.8 854.5H31.5"/></g><g fill="none" stroke="#3d3d45" stroke-width="2" stroke-linecap="round" stroke-linejoin="round"><circle cx="22" cy="892" r="11"/><path d="M22 889V898"/></g><circle cx="22" cy="885.5" r="1.3" fill="#3d3d45"/><g fill="none" stroke="#fff" stroke-width="2" stroke-linecap="round" stroke-linejoin="round"><path d="M56 34.5V28L71.5 12.5L77.5 18.5L62 34Z"/><path d="M68 16L74 22"/></g><g fill="none" stroke="#3d3d45" stroke-width="2.4" stroke-linecap="round" stroke-linejoin="round"><path d="M104.5 14L100 18L104.5 22"/><path d="M100.5 18H117a6.5 6.5 0 0 1 0 13H110"/></g><g fill="none" stroke="#3d3d45" stroke-width="2.2" stroke-linecap="round" stroke-linejoin="round"><rect x="148" y="12" width="16.5" height="22" rx="2.5"/></g><g fill="#3d3d45"><rect x="150.5" y="14.5" width="11.5" height="3"/><rect x="150.5" y="21" width="2" height="2"/><rect x="155" y="21" width="2" height="2"/><rect x="159.5" y="21" width="2" height="2"/><rect x="150.5" y="25" width="2" height="2"/><rect x="155" y="25" width="2" height="2"/><rect x="159.5" y="25" width="2" height="2"/><rect x="150.5" y="29" width="6.5" height="2"/><rect x="159.5" y="29" width="2" height="2"/></g><g fill="none" stroke="#3d3d45" stroke-width="2" stroke-linecap="round" stroke-linejoin="round"><rect x="189.5" y="11.5" width="10.5" height="10.5" rx="2"/><path d="M194.7 14V19.5M192 16.8H197.5"/><rect x="191" y="27" width="7" height="7" rx="1.5"/><rect x="206" y="27" width="7" height="7" rx="1.5"/><path d="M194.7 22V27M198 30.5H206"/></g><g fill="none" stroke="#b9b9c0" stroke-width="2" stroke-linecap="round" stroke-linejoin="round"><rect x="233" y="11.5" width="7" height="7" rx="1.5"/><path d="M236.5 18.5V25M240 28.5H246"/><rect x="233" y="25" width="7" height="7" rx="1.5"/><rect x="246" y="24" width="10" height="10" rx="2"/><path d="M251 26.5V31.5M248.5 29H253.5"/></g><g fill="none" stroke="#3d3d45" stroke-width="2" stroke-linecap="round" stroke-linejoin="round"><path d="M295 11.5V22.5M289.5 17H300.5"/><rect x="277.5" y="29.5" width="23" height="5" rx="2.5"/></g><g fill="none" stroke="#3d3d45" stroke-width="2" stroke-linecap="round" stroke-linejoin="round"><rect x="333" y="14" width="8" height="8.5" rx="1.5"/><path d="M335.5 12H342.5a2 2 0 0 1 2 2V20"/><rect x="322" y="29.5" width="23" height="5" rx="2.5"/></g><g fill="none" stroke="#3d3d45" stroke-width="2.2" stroke-linecap="round" stroke-linejoin="round"><rect x="366" y="15" width="19" height="19.5" rx="2.5"/><path d="M371 11.5H387a2 2 0 0 1 2 2V28"/></g><g fill="none" stroke="#3d3d45" stroke-width="2" stroke-linecap="round" stroke-linejoin="round"><circle cx="414.5" cy="30" r="3.8"/><circle cx="428.5" cy="30" r="3.8"/><path d="M411 11.5L424 27M432 11.5L416.5 27.5"/></g><g fill="none" stroke="#b9b9c0" stroke-width="2" stroke-linecap="round" stroke-linejoin="round"><path d="M459 13.5H455a2 2 0 0 0-2 2V32a2 2 0 0 0 2 2H475a2 2 0 0 0 2-2V15.5a2 2 0 0 0-2-2H471"/></g><rect x="459.5" y="11" width="11" height="7" fill="#b9b9c0"/><g fill="none" stroke="#3d3d45" stroke-width="3.2" stroke-linecap="round" stroke-linejoin="round"><path d="M519 13.8L514.5 18.5"/></g><g fill="none" stroke="#3d3d45" stroke-width="2" stroke-linecap="round" stroke-linejoin="round"><path d="M509.8 17C507 20.5 503 23 498.3 24.3L506.5 32C510.5 30.8 514.8 28.2 517.6 24.8Z"/></g><path d="M501.5 27.5L506.5 32C508.5 31.4 510 30.7 511.5 29.8C508 29.2 504.5 28.5 501.5 27.5Z" fill="#3d3d45"/><g fill="none" stroke="#3d3d45" stroke-width="2.2" stroke-linecap="round" stroke-linejoin="round"><path d="M543.5 14.5H564"/><path d="M546.5 15V32.5a2 2 0 0 0 2 2H559a2 2 0 0 0 2-2V15"/></g><rect x="549" y="10.5" width="9.5" height="3.5" rx="1" fill="#3d3d45"/><g fill="none" stroke="#b9b9c0" stroke-width="2" stroke-linecap="round" stroke-linejoin="round"><path d="M599 34.5V12M592 19L599 12L606 19"/></g><g fill="none" stroke="#3d3d45" stroke-width="2" stroke-linecap="round" stroke-linejoin="round"><path d="M642.5 11.5V34M635.5 27L642.5 34L649.5 27"/></g><g fill="none" stroke="#3d3d45" stroke-width="2" stroke-linecap="round" stroke-linejoin="round"><path d="M699 23H675M681.5 16.5L675 23L681.5 29.5"/></g><g fill="none" stroke="#b9b9c0" stroke-width="2" stroke-linecap="round" stroke-linejoin="round"><path d="M718.5 23H742.5M736 16.5L742.5 23L736 29.5"/></g><g fill="none" stroke="#3d3d45" stroke-width="2" stroke-linecap="round" stroke-linejoin="round"><path d="M766 33L777 22a6.5 6.5 0 0 0 8.5-8.5L782 17L779 14L782.5 10.5a6.5 6.5 0 0 0-8.5 8.5L763.5 30a2 2 0 0 0 2.5 3Z"/></g><path d="M781.5 31.5H787L784.25 34Z" fill="#3d3d45"/><g fill="none" stroke="#3d3d45" stroke-width="2" stroke-linecap="round" stroke-linejoin="round"><path d="M829.60 22.90L829.68 23.48L829.90 24.09L830.22 24.75L830.56 25.49L830.84 26.27L830.99 27.08L830.95 27.85L830.69 28.55L830.21 29.12L829.56 29.55L828.79 29.82L827.97 29.97L827.17 30.04L826.43 30.10L825.79 30.22L825.25 30.43L824.79 30.79L824.38 31.29L823.95 31.90L823.49 32.56L822.95 33.20L822.33 33.73L821.63 34.08L820.90 34.20L820.17 34.08L819.47 33.73L818.85 33.20L818.31 32.56L817.85 31.90L817.42 31.29L817.01 30.79L816.55 30.43L816.01 30.22L815.37 30.10L814.63 30.04L813.83 29.97L813.01 29.82L812.24 29.55L811.59 29.12L811.11 28.55L810.85 27.85L810.81 27.08L810.96 26.27L811.24 25.49L811.58 24.75L811.90 24.09L812.12 23.48L812.20 22.90L812.12 22.32L811.90 21.71L811.58 21.05L811.24 20.31L810.96 19.53L810.81 18.72L810.85 17.95L811.11 17.25L811.59 16.68L812.24 16.25L813.01 15.98L813.83 15.83L814.63 15.76L815.37 15.70L816.01 15.58L816.55 15.37L817.01 15.01L817.42 14.51L817.85 13.90L818.31 13.24L818.85 12.60L819.47 12.07L820.17 11.72L820.90 11.60L821.63 11.72L822.33 12.07L822.95 12.60L823.49 13.24L823.95 13.90L824.38 14.51L824.79 15.01L825.25 15.37L825.79 15.58L826.43 15.70L827.17 15.76L827.97 15.83L828.79 15.98L829.56 16.25L830.21 16.68L830.69 17.25L830.95 17.95L830.99 18.72L830.84 19.53L830.56 20.31L830.22 21.05L829.90 21.71L829.68 22.32L829.60 22.90Z"/><circle cx="820.9" cy="22.9" r="4.3"/></g><path d="M178.5 1V44" stroke="#c4c4ca" stroke-width="1"/><path d="M576.5 1V44" stroke="#c4c4ca" stroke-width="1"/><path d="M753.5 1V44" stroke="#c4c4ca" stroke-width="1"/><path d="M798.5 1V44" stroke="#c4c4ca" stroke-width="1"/><path d="M1699.5 1V44" stroke="#c4c4ca" stroke-width="1"/><path d="M1744.5 1V44" stroke="#c4c4ca" stroke-width="1"/><path d="M1789.5 1V44" stroke="#c4c4ca" stroke-width="1"/><g fill="none" stroke="#3d3d45" stroke-width="2" stroke-linecap="round" stroke-linejoin="round"><path d="M1709.5 11.5H1733.5M1709.5 34.5H1733.5"/><path d="M1716.5 17V28M1713.5 25L1716.5 28L1719.5 25M1725.5 28V17M1722.5 20L1725.5 17L1728.5 20"/></g><g fill="none" stroke="#3d3d45" stroke-width="2" stroke-linecap="round" stroke-linejoin="round"><path d="M1778.5 23a11.5 11.5 0 1 1-3.4-8.2"/><path d="M1776 10V15.5H1770.5"/></g><g fill="none" stroke="#3d3d45" stroke-width="2" stroke-linecap="round" stroke-linejoin="round"><rect x="1799.5" y="11.5" width="24" height="23" rx="2.5"/><path d="M1806.5 11.5V34.5"/></g><g fill="none" stroke="#3d3d45" stroke-width="2" stroke-linecap="round" stroke-linejoin="round"><rect x="1843.5" y="11.5" width="24" height="23" rx="2.5"/><path d="M1860.5 11.5V34.5"/></g><g fill="none" stroke="#3d3d45" stroke-width="2" stroke-linecap="round" stroke-linejoin="round"><rect x="1887.5" y="11.5" width="24" height="23" rx="2.5"/><path d="M1887.5 27.5H1911.5"/></g><path d="M61.5 64H72.5L67 70Z" fill="#3d3d45"/><g fill="none" stroke="#3d3d45" stroke-width="2.2" stroke-linecap="round" stroke-linejoin="round"><circle cx="566" cy="65" r="9"/><path d="M572.5 71.5L579 78"/></g><g fill="none" stroke="#3d3d45" stroke-width="2.2" stroke-linecap="round" stroke-linejoin="round"><path d="M600.5 67C603.5 62 607.5 59.8 611.8 59.8C616.1 59.8 620.1 62 623.2 67C620.1 72 616.1 74.2 611.8 74.2C607.5 74.2 603.5 72 600.5 67Z"/><circle cx="611.8" cy="67" r="2.6"/></g><g fill="none" stroke="#3d3d45" stroke-width="2.2" stroke-linecap="round" stroke-linejoin="round"><rect x="645" y="56" width="22.5" height="22" rx="2"/><path d="M650 78V63.5a2 2 0 0 1 2-2H667.5"/><rect x="656" y="68" width="11.5" height="10"/></g><g fill="none" stroke="#3d3d45" stroke-width="2" stroke-linecap="round" stroke-linejoin="round"><path d="M692.5 58H691a1.8 1.8 0 0 0-1.8 1.8V76.2A1.8 1.8 0 0 0 691 78H700M704.5 58H706a1.8 1.8 0 0 1 1.8 1.8V64"/><path d="M694.5 65.2H699.5M694.5 68.3H697M706 76.5V78"/><path d="M700.5 76.2L701 73.5L707.5 67L709.8 69.3L703.3 75.8Z"/></g><rect x="693.3" y="55.5" width="10.4" height="6" rx="1" fill="#3d3d45"/><path d="M722.5 45V89" stroke="#c4c4ca" stroke-width="1"/><path d="M811.5 45V89" stroke="#c4c4ca" stroke-width="1"/><g fill="none" stroke="#3d3d45" stroke-width="2" stroke-linecap="round" stroke-linejoin="round"><path d="M751.5 59H734.5a1.5 1.5 0 0 0-1.5 1.5V77a1.5 1.5 0 0 0 1.5 1.5H753a1.5 1.5 0 0 0 1.5-1.5V66"/><path d="M738.5 68L743 72.5L750 64"/><path d="M750.5 59L753 61L757.5 55.5"/></g><g fill="none" stroke="#3d3d45" stroke-width="2" stroke-linecap="round" stroke-linejoin="round"><path d="M794 59H778a1.5 1.5 0 0 0-1.5 1.5V77a1.5 1.5 0 0 0 1.5 1.5H796.5a1.5 1.5 0 0 0 1.5-1.5V66"/><path d="M782 68L786.5 72.5L793.5 64"/><path d="M796.5 55.5L800.5 59.5M800.5 55.5L796.5 59.5"/></g><g fill="none" stroke="#3d3d45" stroke-width="2.2" stroke-linecap="round" stroke-linejoin="round"><path d="M822 57.5H841.5a1 1 0 0 1 .8 1.6L835 67.5V75.5a.8 .8 0 0 1-1.2.7L830.5 74.5V67.5L821.2 59.1a1 1 0 0 1 .8-1.6Z"/></g><path d="M840.5 75.5H846L843.25 78Z" fill="#3d3d45"/><g fill="none" stroke="#3d3d45" stroke-width="2.2" stroke-linecap="round" stroke-linejoin="round"><path d="M939.5 68L950 78.5M950 68L939.5 78.5"/></g><g fill="none" stroke="#3d3d45" stroke-width="1.4" stroke-linecap="round" stroke-linejoin="round"><path d="M952 56H962.5L958.5 60.5V65L956 64V60.5Z"/></g><g fill="none" stroke="#3d3d45" stroke-width="2" stroke-linecap="round" stroke-linejoin="round"><path d="M1800.5 59.3H1823.5M1800.5 67H1823.5M1800.5 74.3H1823.5"/></g><g fill="#f0f0f3" stroke="#3d3d45" stroke-width="2"><circle cx="1809" cy="59.3" r="2.8"/><circle cx="1816.3" cy="67" r="2.8"/><circle cx="1807.3" cy="74.3" r="2.8"/></g><g fill="none" stroke="#3d3d45" stroke-width="2" stroke-linecap="round" stroke-linejoin="round"><path d="M1854 55.5V59.7L1862.7 62L1846.7 69.3L1854.3 71.7V76.5"/></g><path d="M1862 76.5H1868.5L1865.25 79.5Z" fill="#3d3d45"/><g fill="none" stroke="#3d3d45" stroke-width="2" stroke-linecap="round" stroke-linejoin="round"><path d="M1891.5 58H1904.5"/><path d="M1891 68.5H1889.5V63a2.5 2.5 0 0 1 2.5-2.5H1904a2.5 2.5 0 0 1 2.5 2.5V68.5H1905"/><rect x="1891.5" y="65" width="13" height="6.5" rx="1.5"/></g><path d="M1906 76.5H1912.5L1909.25 79.5Z" fill="#3d3d45"/></svg>
</body></html>
